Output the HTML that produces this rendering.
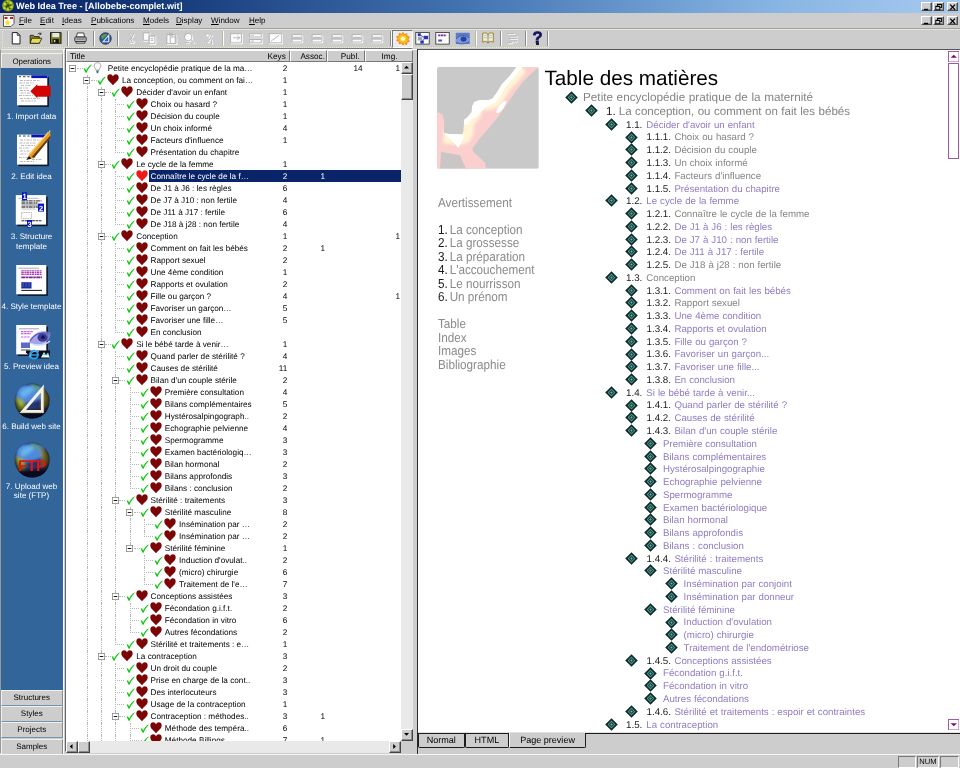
<!DOCTYPE html>
<html lang="fr"><head><meta charset="utf-8"><title>Web Idea Tree - [Allobebe-complet.wit]</title>
<style>
html,body{margin:0;padding:0}
body{width:960px;height:768px;overflow:hidden;position:relative;background:#cdcdcd;font-family:"Liberation Sans",sans-serif;font-size:8.2px;color:#000;text-rendering:geometricPrecision}
.abs{position:absolute}
div,span,a{box-sizing:border-box}
.ui{font-family:"Liberation Sans",sans-serif;font-size:8.2px;white-space:nowrap;line-height:10px}
#titlebar{left:0;top:0;width:960px;height:13.2px;background:linear-gradient(90deg,#0a246a 0%,#123676 15%,#4676b4 50%,#86b4e2 80%,#a6caf0 100%)}
#titlebar .t{left:16px;top:1px;color:#fff;font-weight:bold;font-size:9.1px;line-height:11px;white-space:nowrap}
.wb{position:absolute;width:11px;height:9.6px;background:#cdcdcd;border:1px solid;border-color:#fff #4c4c4c #4c4c4c #fff;box-shadow:inset -1px -1px 0 #8e8e8e}
.menu span{position:absolute;top:16px;font-size:8.05px;line-height:10px;white-space:nowrap}
.menu u{text-decoration:underline}
.sep{position:absolute;top:31px;width:2px;height:15px;border-left:1px solid #8a8a8a;border-right:1px solid #fff}
.ic{position:absolute;top:31px}
.btn{position:absolute;background:#cdcdcd;border:1px solid;border-color:#fff #555 #555 #fff;text-align:center;font-size:8.3px;line-height:13px}
.hd{position:absolute;top:50.2px;height:11.4px;background:#cdcdcd;border:1px solid;border-color:#fff #777 #777 #fff;font-size:8.2px;line-height:11.2px;white-space:nowrap;padding:0 3px}
.row{position:absolute;left:0;width:335px;height:12px;font-size:8.2px;line-height:12px;white-space:nowrap}
.row .tx{position:absolute;top:0;height:12px;letter-spacing:0}
.row .n{position:absolute;top:0;text-align:right;width:20px}
.sel{background:#0a246a;color:#fff}
.vl{position:absolute;width:0;border-left:1px dotted #b6b6b6}
.hl{position:absolute;height:0;border-top:1px dotted #b6b6b6}
.oplbl{position:absolute;left:0;width:63px;text-align:center;color:#fff;font-size:8.05px;line-height:9.7px}
.toc{position:absolute;white-space:nowrap;font-family:"Liberation Sans",sans-serif}
.g{color:#848484}.p{color:#907cc2}.k{color:#1a1a1a}
.nav .k{margin-right:-1.5px}
.nav{position:absolute;left:437.5px;transform:scaleX(0.9);transform-origin:0 0;font-size:13px;line-height:13.5px;color:#8a8a8a;white-space:nowrap}
</style></head><body><div id="app" style="position:absolute;left:0;top:0;width:960px;height:768px;overflow:hidden;will-change:transform">
<svg width="0" height="0" style="position:absolute"><defs>
<symbol id="heart" viewBox="0 0 12 11" preserveAspectRatio="none"><path d="M6 10.6 C4.6 8.6 0.3 6.3 0.3 3.3 C0.3 1.3 1.7 0.3 3.1 0.3 C4.4 0.3 5.5 1.1 6 2.3 C6.5 1.1 7.6 0.3 8.9 0.3 C10.3 0.3 11.7 1.3 11.7 3.3 C11.7 6.3 7.4 8.6 6 10.6Z"/></symbol>
<symbol id="chk" viewBox="0 0 9 9"><path d="M0.6 4.6 L2.0 3.9 L3.1 6.2 C4.4 3.6 6.2 1.5 8.4 0.2 L8.7 0.7 C6.6 2.7 4.8 5.4 3.6 8.6 L2.6 8.6 Z" fill="#14c814"/></symbol>
<symbol id="box" viewBox="0 0 7 7"><rect x="0.4" y="0.4" width="6.2" height="6.2" fill="#fff" stroke="#8a8a8a" stroke-width="0.8"/><path d="M1.7 3.5H5.3" stroke="#000" stroke-width="0.9"/></symbol>
<symbol id="dia" viewBox="0 0 12 12"><path d="M6 0.2L11.8 6L6 11.8L0.2 6Z" fill="#0e2a28"/><path d="M6 2.4L9.600 6L6 9.600L2.400 6Z" fill="#4f958e"/><path d="M6 3.600L8.400 6L6 8.400L3.600 6Z" fill="#143634"/><path d="M6 4.800L7.200 6L6 7.200L4.800 6Z" fill="#6ab0a8"/></symbol>
</defs></svg>
<div id="titlebar" class="abs"><svg class="abs" style="left:0.500px;top:0" width="14" height="13" viewBox="0 0 14 13"><path d="M5.800 10h2.800l0.500 2.400h-3.800z" fill="#4a3418"/><ellipse cx="7" cy="5.600" rx="5.900" ry="5.700" fill="#7c9c1c"/><g fill="#d8d028"><circle cx="4" cy="4" r="1.500"/><circle cx="9.500" cy="3" r="1.400"/><circle cx="10.500" cy="7" r="1.300"/><circle cx="3.500" cy="8" r="1.300"/><circle cx="7" cy="9.300" r="1.200"/><circle cx="6.800" cy="1.500" r="1.100"/></g><g fill="#2c5a14"><circle cx="7" cy="5.500" r="1.700"/><circle cx="5.500" cy="2.500" r="0.800"/><circle cx="9.800" cy="5" r="0.800"/><circle cx="5.300" cy="7" r="0.900"/><circle cx="8.500" cy="8.500" r="0.800"/></g><g fill="#68c838"><circle cx="8.300" cy="1.800" r="0.800"/><circle cx="2.300" cy="5.800" r="0.800"/><circle cx="11.300" cy="5" r="0.700"/></g></svg>
<div class="abs t">Web Idea Tree - [Allobebe-complet.wit]</div>
<div class="wb" style="left:921px;top:1.6px"><svg class="abs" style="left:0;top:0" width="9" height="8" viewBox="0 0 9 8"><path d="M2 6.5h4" stroke="#000" stroke-width="1.4"/></svg></div><div class="wb" style="left:932.5px;top:1.6px"><svg class="abs" style="left:0;top:0" width="9" height="8" viewBox="0 0 9 8"><rect x="3.5" y="1.2" width="4" height="3.4" fill="none" stroke="#000" stroke-width="0.9"/><rect x="1.8" y="3.2" width="4" height="3.6" fill="#cdcdcd" stroke="#000" stroke-width="0.9"/><path d="M1.8 3.5h4M3.5 1.5h4" stroke="#000" stroke-width="1"/></svg></div><div class="wb" style="left:946.5px;top:1.6px"><svg class="abs" style="left:0;top:0" width="9" height="8" viewBox="0 0 9 8"><path d="M2.2 1.6L7 6.6M7 1.6L2.2 6.6" stroke="#000" stroke-width="1.3"/></svg></div>
</div>
<div class="menu">
<svg class="abs" style="left:3px;top:15px" width="12" height="12" viewBox="0 0 12 12"><path d="M0.5 0.5h10.5v8l-3 3h-7.5z" fill="#fff" stroke="#333" stroke-width="0.8"/><path d="M1.5 2h3v2h-3zM7 2h3v2h-3z" fill="#d01818"/><path d="M4.5 4.5l1 2 2 .3-1.5 1.5.4 2.2-1.9-1-1.9 1 .4-2.2L1.5 6.8l2-.3z" fill="#f4e020"/></svg>
<span style="left:19px"><u>F</u>ile</span>
<span style="left:40px"><u>E</u>dit</span>
<span style="left:62px"><u>I</u>deas</span>
<span style="left:91px"><u>P</u>ublications</span>
<span style="left:143px"><u>M</u>odels</span>
<span style="left:176px"><u>D</u>isplay</span>
<span style="left:211px"><u>W</u>indow</span>
<span style="left:249px"><u>H</u>elp</span>
</div>
<div class="wb" style="left:921px;top:15.9px"><svg class="abs" style="left:0;top:0" width="9" height="8" viewBox="0 0 9 8"><path d="M2 6.5h4" stroke="#000" stroke-width="1.4"/></svg></div><div class="wb" style="left:932.5px;top:15.9px"><svg class="abs" style="left:0;top:0" width="9" height="8" viewBox="0 0 9 8"><rect x="3.5" y="1.2" width="4" height="3.4" fill="none" stroke="#000" stroke-width="0.9"/><rect x="1.8" y="3.2" width="4" height="3.6" fill="#cdcdcd" stroke="#000" stroke-width="0.9"/><path d="M1.8 3.5h4M3.5 1.5h4" stroke="#000" stroke-width="1"/></svg></div><div class="wb" style="left:946.5px;top:15.9px"><svg class="abs" style="left:0;top:0" width="9" height="8" viewBox="0 0 9 8"><path d="M2.2 1.6L7 6.6M7 1.6L2.2 6.6" stroke="#000" stroke-width="1.3"/></svg></div>
<div class="abs" style="left:0;top:28px;width:960px;height:1px;background:#a2a2a2"></div><div class="abs" style="left:0;top:29px;width:960px;height:1px;background:#e6e6da"></div><div class="abs" style="left:2px;top:29px;width:547px;height:18.500px;border:1px dotted #ececc4;border-right:0;border-top:0"></div>
<svg class="ic" style="left:10.5px;top:32px" width="10" height="12.5" viewBox="0 0 11 15"><path d="M1 0.7h6l3.3 3.3v10.3h-9.3z" fill="#fff" stroke="#222" stroke-width="1.2"/><path d="M7 0.7v3.3h3.3" fill="none" stroke="#222" stroke-width="1"/></svg>
<svg class="ic" style="left:29px;top:32px" width="14" height="12.5" viewBox="0 0 16 15"><path d="M1 4h4l1 1.5h6v8h-11z" fill="#8a8420" stroke="#222" stroke-width="1"/><path d="M3 7.5h12l-3 6h-11z" fill="#e8dc50" stroke="#222" stroke-width="1"/><path d="M10 2.5c1.5-1.5 3-1.5 4 0M14 0.8v2h-2" fill="none" stroke="#222" stroke-width="1"/></svg>
<svg class="ic" style="left:50px;top:32px" width="11.5" height="12" viewBox="0 0 15 15"><rect x="0.6" y="0.6" width="13.8" height="13.8" fill="#7a7a18" stroke="#111" stroke-width="1.2"/><rect x="3" y="1" width="9" height="5.5" fill="#e8e8e8"/><rect x="3.5" y="9" width="8" height="5" fill="#111"/><rect x="5" y="10" width="2" height="3" fill="#ccc"/></svg>
<div class="sep" style="left:67px"></div>
<svg class="ic" style="left:74px;top:32px" width="13" height="12.5" viewBox="0 0 16 15"><path d="M4 1h8l1 5h-10z" fill="#fff" stroke="#222" stroke-width="1"/><rect x="1" y="6" width="14" height="5.5" rx="1" fill="#bdbdbd" stroke="#222" stroke-width="1.1"/><path d="M2.5 11.5h11v2h-11z" fill="#e8e8e8" stroke="#222" stroke-width="1"/><path d="M3 8.5h10" stroke="#555" stroke-width="1"/></svg>
<div class="sep" style="left:93px"></div>
<svg class="ic" style="left:98.5px;top:32px" width="13" height="13" viewBox="0 0 16 16"><circle cx="8" cy="8" r="7" fill="#2a5cae" stroke="#333" stroke-width="1.2"/><path d="M3 5c2-2 5-3 7-2 -1 2-4 3-5 6 -1-1-2-2-2-4z" fill="#5aa03c"/><path d="M5 12L12 4v8z" fill="none" stroke="#e8e8e8" stroke-width="1.4"/></svg>
<div class="sep" style="left:117px"></div>
<svg class="ic" style="left:127px;top:32px" width="9" height="12.5" viewBox="0 0 12 15"><g fill="#fbfbfb" stroke="#fdfdfd" stroke-width="1.4" transform="translate(0.9,0.9)"><path d="M3 1l4 8M9 1l-4 8M4.5 9.5a2 2 0 1 0 .1 0M7.5 9.5a2 2 0 1 0 .1 0"/></g><g fill="none" stroke="#b0b0b0" stroke-width="1.1"><path d="M3 1l4 8M9 1l-4 8M4.5 9.5a2 2 0 1 0 .1 0M7.5 9.5a2 2 0 1 0 .1 0"/></g></svg>
<svg class="ic" style="left:142px;top:32px" width="15" height="12.5" viewBox="0 0 17 15"><g fill="#fbfbfb" stroke="#fdfdfd" stroke-width="1.4" transform="translate(0.9,0.9)"><path d="M1 1h7v9h-7zM8 5h7v9h-7z"/><path d="M10 8h3M10 10h3"/></g><g fill="none" stroke="#b0b0b0" stroke-width="1.1"><path d="M1 1h7v9h-7zM8 5h7v9h-7z"/><path d="M10 8h3M10 10h3"/></g></svg>
<svg class="ic" style="left:165px;top:32px" width="13" height="12.5" viewBox="0 0 15 15"><g fill="#fbfbfb" stroke="#fdfdfd" stroke-width="1.4" transform="translate(0.9,0.9)"><path d="M2 3h10v11h-10zM5 1.5h4v3h-4zM6 6h7v8h-7z"/></g><g fill="none" stroke="#b0b0b0" stroke-width="1.1"><path d="M2 3h10v11h-10zM5 1.5h4v3h-4zM6 6h7v8h-7z"/></g></svg>
<svg class="ic" style="left:183px;top:32px" width="13" height="12.5" viewBox="0 0 15 15"><g fill="#fbfbfb" stroke="#fdfdfd" stroke-width="1.4" transform="translate(0.9,0.9)"><circle cx="6" cy="6" r="4.5"/><path d="M9.5 9.5l4 4"/><path d="M2 13h5"/></g><g fill="none" stroke="#b0b0b0" stroke-width="1.1"><circle cx="6" cy="6" r="4.5"/><path d="M9.5 9.5l4 4"/><path d="M2 13h5"/></g></svg>
<svg class="ic" style="left:203px;top:32px" width="12" height="12.5" viewBox="0 0 14 15"><g fill="#fbfbfb" stroke="#fdfdfd" stroke-width="1.4" transform="translate(0.9,0.9)"><path d="M3 3c3-3 6 0 3 4M9 2l2 3M4 10l2 2 3-5M10 9v5"/></g><g fill="none" stroke="#b0b0b0" stroke-width="1.1"><path d="M3 3c3-3 6 0 3 4M9 2l2 3M4 10l2 2 3-5M10 9v5"/></g></svg>
<svg class="ic" style="left:228.5px;top:32px" width="14" height="12.5" viewBox="0 0 15 15"><g fill="#fbfbfb" stroke="#fdfdfd" stroke-width="1.4" transform="translate(0.9,0.9)"><path d="M1 2h13v11h-13zM4 7h8M9 4.5l3 2.5-3 2.5"/></g><g fill="none" stroke="#b0b0b0" stroke-width="1.1"><path d="M1 2h13v11h-13zM4 7h8M9 4.5l3 2.5-3 2.5"/></g></svg>
<svg class="ic" style="left:248px;top:32px" width="15" height="12.5" viewBox="0 0 16 15"><g fill="#fbfbfb" stroke="#fdfdfd" stroke-width="1.4" transform="translate(0.9,0.9)"><path d="M1 2h14v4h-14zM1 9h14v4h-14zM3 4h3M3 11h3"/></g><g fill="none" stroke="#b0b0b0" stroke-width="1.1"><path d="M1 2h14v4h-14zM1 9h14v4h-14zM3 4h3M3 11h3"/></g></svg>
<svg class="ic" style="left:267.5px;top:32px" width="15" height="12.5" viewBox="0 0 17 15"><g fill="#fbfbfb" stroke="#fdfdfd" stroke-width="1.4" transform="translate(0.9,0.9)"><path d="M1 2h15v11h-15zM3 11l10-7"/></g><g fill="none" stroke="#b0b0b0" stroke-width="1.1"><path d="M1 2h15v11h-15zM3 11l10-7"/></g></svg>
<svg class="ic" style="left:290px;top:32px" width="14" height="12.5" viewBox="0 0 16 15"><g fill="#fbfbfb" stroke="#fdfdfd" stroke-width="1.4" transform="translate(0.9,0.9)"><rect x="2" y="3" width="12" height="3.4" rx="1.5"/><rect x="2" y="8.6" width="12" height="3.4" rx="1.5"/><path d="M1 7.5h14"/></g><g fill="none" stroke="#b0b0b0" stroke-width="1.1"><rect x="2" y="3" width="12" height="3.4" rx="1.5"/><rect x="2" y="8.6" width="12" height="3.4" rx="1.5"/><path d="M1 7.5h14"/></g></svg>
<svg class="ic" style="left:310px;top:32px" width="14" height="12.5" viewBox="0 0 16 15"><g fill="#fbfbfb" stroke="#fdfdfd" stroke-width="1.4" transform="translate(0.9,0.9)"><rect x="2" y="3" width="12" height="3.4" rx="1.5"/><rect x="2" y="8.6" width="12" height="3.4" rx="1.5"/><path d="M1 7.5h14"/></g><g fill="none" stroke="#b0b0b0" stroke-width="1.1"><rect x="2" y="3" width="12" height="3.4" rx="1.5"/><rect x="2" y="8.6" width="12" height="3.4" rx="1.5"/><path d="M1 7.5h14"/></g></svg>
<svg class="ic" style="left:330px;top:32px" width="14" height="12.5" viewBox="0 0 16 15"><g fill="#fbfbfb" stroke="#fdfdfd" stroke-width="1.4" transform="translate(0.9,0.9)"><rect x="2" y="3" width="12" height="3.4" rx="1.5"/><rect x="2" y="8.6" width="12" height="3.4" rx="1.5"/><path d="M1 7.5h14"/></g><g fill="none" stroke="#b0b0b0" stroke-width="1.1"><rect x="2" y="3" width="12" height="3.4" rx="1.5"/><rect x="2" y="8.6" width="12" height="3.4" rx="1.5"/><path d="M1 7.5h14"/></g></svg>
<svg class="ic" style="left:350px;top:32px" width="14" height="12.5" viewBox="0 0 16 15"><g fill="#fbfbfb" stroke="#fdfdfd" stroke-width="1.4" transform="translate(0.9,0.9)"><rect x="2" y="3" width="12" height="3.4" rx="1.5"/><rect x="2" y="8.6" width="12" height="3.4" rx="1.5"/><path d="M1 7.5h14"/></g><g fill="none" stroke="#b0b0b0" stroke-width="1.1"><rect x="2" y="3" width="12" height="3.4" rx="1.5"/><rect x="2" y="8.6" width="12" height="3.4" rx="1.5"/><path d="M1 7.5h14"/></g></svg>
<svg class="ic" style="left:370px;top:32px" width="14" height="12.5" viewBox="0 0 16 15"><g fill="#fbfbfb" stroke="#fdfdfd" stroke-width="1.4" transform="translate(0.9,0.9)"><rect x="2" y="3" width="12" height="3.4" rx="1.5"/><rect x="2" y="8.6" width="12" height="3.4" rx="1.5"/><path d="M1 7.5h14"/></g><g fill="none" stroke="#b0b0b0" stroke-width="1.1"><rect x="2" y="3" width="12" height="3.4" rx="1.5"/><rect x="2" y="8.6" width="12" height="3.4" rx="1.5"/><path d="M1 7.5h14"/></g></svg>
<div class="sep" style="left:389.5px"></div>
<div class="abs" style="left:392px;top:29.5px;width:21px;height:18px;border:1px solid;border-color:#777 #fff #fff #777;background:#ececec"></div>
<svg class="ic" style="left:396px;top:32px" width="14" height="13.5" viewBox="0 0 16 16"><g fill="#f8b818" stroke="#ee7a14" stroke-width="1"><path d="M8 0.5l1.6 2.6 2.9-1 .1 3 3 .9-1.7 2.5 1.7 2.5-3 .9-.1 3-2.9-1L8 15.5l-1.6-2.6-2.9 1-.1-3-3-.9L2.1 8 .4 5.500l3-.9.1-3 2.900 1z"/></g><circle cx="8" cy="8" r="3.6" fill="#f8d838"/><circle cx="8" cy="8" r="2.2" fill="#fffdf0"/></svg>
<svg class="ic" style="left:415px;top:32px" width="15" height="12.8" viewBox="0 0 17 15"><rect x="0.6" y="0.6" width="15.8" height="13.6" fill="#fcfcfc" stroke="#3a3a3a" stroke-width="1"/><path d="M3 1.500h3.500v3.500h-3.500zM10 4.500h5v4h-5zM6 10h4v3.500h-4z" fill="#2a30b0"/><path d="M3 6h5v4h-5z" fill="#9aa0a8"/><path d="M6.500 4l4 2.500M10 8.500l-2 2" stroke="#5a6ad0" stroke-width="1.2"/></svg>
<svg class="ic" style="left:435px;top:32px" width="15" height="12.8" viewBox="0 0 17 15"><rect x="0.6" y="0.6" width="15.800" height="13.600" fill="#fcfcfc" stroke="#3a3a3a" stroke-width="1"/><path d="M3.500 4h9.500" stroke="#8a20a8" stroke-width="2.2" stroke-dasharray="2.500 0.600"/><path d="M3.500 10h4.500" stroke="#4a5aa0" stroke-width="2.400"/></svg>
<svg class="ic" style="left:455px;top:32px" width="15.5" height="12.8" viewBox="0 0 17 15"><rect x="0.3" y="0.8" width="16.400" height="13.400" rx="1" fill="#5c7cc8"/><path d="M0.500 9c3-6 12-7 16-2v3c-4 4-12 4-16 1z" fill="#7e9ce0"/><path d="M1 8c4-5 11-5 15-1" fill="none" stroke="#3a54a8" stroke-width="1.1"/><ellipse cx="9.500" cy="8.300" rx="3.600" ry="3" fill="#2c4296"/><path d="M1.500 12.500c4 2 10 2 14-1" fill="none" stroke="#4460b4" stroke-width="1"/></svg>
<svg class="ic" style="left:480.5px;top:32px" width="14" height="12.5" viewBox="0 0 15 15"><path d="M1 2c2-1 5-1 6.500 1 1.500-2 4.500-2 6.500-1v10c-2-1-5-1-6.500 1-1.500-2-4.500-2-6.500-1z" fill="#f2eede" stroke="#b09850" stroke-width="1.5"/><path d="M7.500 3v10" stroke="#6a5a30" stroke-width="0.8"/><path d="M2.500 4.500c1.500-.5 3-.3 4 .5M2.500 7c1.500-.5 3-.3 4 .5M8.500 5c1-.8 2.500-1 4-.5M8.500 7.500c1-.8 2.500-1 4-.5" fill="none" stroke="#7ab0a8" stroke-width="0.7"/></svg>
<div class="sep" style="left:499.5px"></div>
<svg class="ic" style="left:505px;top:32px" width="14" height="12.5" viewBox="0 0 16 15"><g fill="#fbfbfb" stroke="#fdfdfd" stroke-width="1.4" transform="translate(0.9,0.9)"><path d="M2 2h9M5 5h9M5 8h9M5 11h9M2 13h6"/></g><g fill="none" stroke="#b0b0b0" stroke-width="1.1"><path d="M2 2h9M5 5h9M5 8h9M5 11h9M2 13h6"/></g></svg>
<div class="sep" style="left:524.5px"></div>
<div class="abs" style="left:531px;top:28.500px;width:13px;text-align:center;font-weight:bold;font-size:16.500px;line-height:18px;color:#14145c;-webkit-text-stroke:0.7px #14145c">?</div><div class="abs" style="left:536px;top:42.800px;width:3.200px;height:2.600px;background:#d8c838;border:0.5px solid #222"></div>
<div class="sep" style="left:547px"></div>
<div class="sep" style="left:474.500px;border-left-color:#b8b8a0"></div>
<div class="sep" style="left:222px;border-left-color:#b8b8a0"></div>
<div class="abs" style="left:0;top:48.5px;width:960px;height:1px;background:#fff"></div>
<div class="abs" style="left:0;top:48.800px;width:64px;height:705px;border:1px solid;border-color:#ececdc #fff #fff #999"></div>
<div class="abs" style="left:1px;top:67.500px;width:61.500px;height:622.500px;background:#32659a"></div>
<div class="btn" style="left:1px;top:52.700px;width:61.500px;height:15.500px;line-height:15.400px;font-size:7.900px;border-color:#f2f2e6 #9c9c9c #cdcdcd #f2f2e6">Operations</div>
<svg class="abs" style="left:12px;top:68.7px" width="44" height="44" viewBox="0 0 44 44"><rect x="6.6" y="7.9" width="30.3" height="30" fill="#0c1828"/><rect x="5" y="6.3" width="30.3" height="30" fill="#fdfdfd"/><rect x="19.3" y="6.3" width="16" height="2.800" fill="#0a14b4"/><path d="M7 7.7h2M11 7.7h2.500M15.5 7.7h2" stroke="#222" stroke-width="0.9"/><g stroke="#9a9a9a" stroke-width="0.7" stroke-dasharray="3 1 1.500 1" fill="none"><path d="M8 11.500h20M7.500 14h14M9 16.500h10M7 19h9M8 21.500h9M8.500 24h11M7 26.500h14M8 29.500h20M9 32h15"/></g><path d="M18.300 22.300L25.300 15.200V16.800H38.600V27.700H25.300V29.300Z" fill="#d20404"/></svg>
<svg class="abs" style="left:12px;top:127.4px" width="44" height="44" viewBox="0 0 44 44"><rect x="6.6" y="9.2" width="30.3" height="30" fill="#0c1828"/><rect x="5" y="7.6" width="30.3" height="30" fill="#fdfdfd"/><rect x="19.3" y="7.6" width="16" height="2.800" fill="#0a14b4"/><path d="M7 9h2M11 9h2.500M15.5 9h2" stroke="#222" stroke-width="0.9"/><g stroke="#9a9a9a" stroke-width="0.7" stroke-dasharray="3 1 1.500 1" fill="none"><path d="M8 13h20M7.500 16h16M9 18.500h14M7 21h11M8 24h10M8.500 27h7M7 30.500h9M20 32.500h10M8 34.500h14"/></g><path d="M14.800 32.300L17.300 27.200 36.500 5.200 38.200 5 38.600 10.500 21.800 31.200Z" fill="#e89a24"/><path d="M21.800 31.200L38.600 10.500 38.400 8.500 20 29.500Z" fill="#5a3a14"/><path d="M17.300 27.200L36.500 5.200" stroke="#f8d070" stroke-width="1.300"/><path d="M14.300 33L17 29.200 19.600 31.600Z" fill="#1a1410"/><path d="M36.500 5.200L38.200 2.800 38.200 5Z" fill="#f0e8d8"/></svg>
<svg class="abs" style="left:12px;top:187.5px" width="44" height="44" viewBox="0 0 44 44"><rect x="5.4" y="8.7" width="30.3" height="29.5" fill="#0c1828"/><rect x="3.8" y="7.1" width="30.3" height="29.5" fill="#fdfdfd"/><path d="M6.500 10.300h20" stroke="#aaa" stroke-width="0.8"/><path d="M9.500 12.900h20M9.500 15h16M9.500 19h20" stroke="#555" stroke-width="1.3" stroke-dasharray="4 0.700 2 0.500"/><path d="M9.500 17h17" stroke="#777" stroke-width="1"/><path d="M9.500 21h14" stroke="#aaa" stroke-width="0.7"/><rect x="9.500" y="24.500" width="10" height="6" fill="none" stroke="#999" stroke-width="0.7" stroke-dasharray="1.500 0.800"/><path d="M9.500 32.800h20" stroke="#333" stroke-width="1.1" stroke-dasharray="3 0.500"/><rect x="10" y="4.300" width="5" height="8" fill="#0a14c8"/><rect x="26" y="15.600" width="6" height="8" fill="#0a14c8"/><rect x="15" y="32" width="5" height="7.500" fill="#0a14c8"/><g fill="#fff" font-family="Liberation Sans,sans-serif" font-size="7.500" font-weight="bold"><text x="10.400" y="11.300">1</text><text x="26.900" y="22.500">2</text><text x="15.400" y="38.600">3</text></g></svg>
<svg class="abs" style="left:12px;top:258px" width="44" height="44" viewBox="0 0 44 44"><rect x="5.800000000000001" y="8.6" width="30.1" height="29.3" fill="#0c1828"/><rect x="4.2" y="7" width="30.1" height="29.3" fill="#fdfdfd"/><path d="M6.500 10.200h20.500" stroke="#9a9aa0" stroke-width="0.8"/><g stroke="#b040b8" stroke-width="1.200" stroke-dasharray="2.500 0.600 1.500 0.500"><path d="M9.300 12.800h20.700M9.300 14.600h20.700M9.300 16.400h20.700"/></g><path d="M9.300 19.300h20.700" stroke="#7a2890" stroke-width="1.800" stroke-dasharray="4 0.500 2.500 0.500"/><rect x="9.300" y="24.200" width="10.200" height="6.300" fill="#1c2c9c"/><path d="M10 26h8.500M10 28h8.500" stroke="#5a78d0" stroke-width="0.700" stroke-dasharray="2 1"/><path d="M9.300 32.400h20.700" stroke="#111" stroke-width="1"/></svg>
<svg class="abs" style="left:12px;top:318.6px" width="44" height="44" viewBox="0 0 44 44"><rect x="5.800000000000001" y="7.6" width="30.1" height="29.4" fill="#0c1828"/><rect x="4.2" y="6" width="30.1" height="29.4" fill="#fdfdfd"/><path d="M7 9.800h20" stroke="#8a8ab0" stroke-width="0.8"/><g stroke="#d060d8" stroke-width="1.200" stroke-dasharray="2.500 0.600"><path d="M9 12.600h12M9 14.600h10M9 18h9"/></g><rect x="9" y="23.500" width="9" height="5.500" fill="#5a6ac8"/><path d="M9 31h9" stroke="#555" stroke-width="1"/><path d="M17 23.500C20 14 30 9.500 38.500 14C38.500 20 34 25.500 27 25.500C23 25.500 20 25 17 23.500Z" fill="#8c8ce0" opacity="0.780"/><path d="M18 22C22 15 30 12 37.500 15" fill="none" stroke="#5a58b8" stroke-width="1.200"/><ellipse cx="30.500" cy="18.500" rx="5" ry="4.300" fill="#3a3c98"/><circle cx="31" cy="18.300" r="1.800" fill="#141450"/><path d="M20 24.500C24 27 32 27 38 22" fill="none" stroke="#c8d4ff" stroke-width="1.300"/><path d="M14 31.500H38V33.500L37 39.500H20L14 33.500Z" fill="#0c0c1c"/><circle cx="22" cy="35.700" r="3.900" fill="none" stroke="#28a0e8" stroke-width="2"/><path d="M17 36h9.500" stroke="#28a0e8" stroke-width="1.500"/><path d="M17.500 38.500C19 32 25 30.500 27 33" fill="none" stroke="#70d0f8" stroke-width="0.900"/><path d="M29 38.500L32 33L34 36.500L36 33.500L37.500 38.500Z" fill="#e8f8f8"/><path d="M30.500 35.500L37 35" stroke="#30b0c0" stroke-width="0.800"/></svg>
<svg class="abs" style="left:12px;top:378.7px" width="44" height="44" viewBox="0 0 44 44"><defs><clipPath id="gc6"><circle cx="20.200" cy="22" r="17.600"/></clipPath><filter id="gb6" x="-30%" y="-30%" width="160%" height="160%"><feGaussianBlur stdDeviation="1.500"/></filter><radialGradient id="gs6" cx="42%" cy="36%" r="62%"><stop offset="0.550" stop-color="#000" stop-opacity="0"/><stop offset="1" stop-color="#05081c" stop-opacity="0.720"/></radialGradient></defs><g clip-path="url(#gc6)"><rect x="0" y="0" width="44" height="44" fill="#1c2868"/><g filter="url(#gb6)"><path d="M4 6H34V16C28 22 20 24 12 24L4 20Z" fill="#5088dc"/><path d="M8 14C12 8 18 7 24 9C20 13 16 17 10 19Z" fill="#68b4ec"/><path d="M18 5C24 4 30 7 30 12C26 13 22 12 18 5Z" fill="#5a9a88"/><path d="M2 18C6 18 12 20 14 26C14 32 10 36 6 34Z" fill="#74861e"/><path d="M5 20C8 20 11 21 12 24L8 28Z" fill="#a8b838"/><path d="M28 10C34 10 38 16 38 24C36 30 32 32 28 28C30 22 30 16 28 10Z" fill="#8c8428"/><path d="M14 26C20 24 28 26 30 32C26 36 18 36 12 33Z" fill="#28386c"/><path d="M4 32H40V44H4Z" fill="#080c28"/></g><circle cx="20.200" cy="22" r="17.600" fill="url(#gs6)"/></g><path d="M30.400 9.500V32.500H10.800Z" fill="none" stroke="#f4f0e4" stroke-width="3" stroke-linejoin="miter"/><path d="M31.700 8V33.800H9" fill="none" stroke="#a89860" stroke-width="0.700" opacity="0.800"/></svg>
<svg class="abs" style="left:12px;top:438.4px" width="44" height="44" viewBox="0 0 44 44"><defs><clipPath id="gc7"><circle cx="20.200" cy="22" r="17.600"/></clipPath><filter id="gb7" x="-30%" y="-30%" width="160%" height="160%"><feGaussianBlur stdDeviation="1.500"/></filter><radialGradient id="gs7" cx="42%" cy="36%" r="62%"><stop offset="0.550" stop-color="#000" stop-opacity="0"/><stop offset="1" stop-color="#05081c" stop-opacity="0.720"/></radialGradient></defs><g clip-path="url(#gc7)"><rect x="0" y="0" width="44" height="44" fill="#1c2868"/><g filter="url(#gb7)"><path d="M4 6H34V16C28 22 20 24 12 24L4 20Z" fill="#5088dc"/><path d="M8 14C12 8 18 7 24 9C20 13 16 17 10 19Z" fill="#68b4ec"/><path d="M18 5C24 4 30 7 30 12C26 13 22 12 18 5Z" fill="#5a9a88"/><path d="M2 18C6 18 12 20 14 26C14 32 10 36 6 34Z" fill="#74861e"/><path d="M5 20C8 20 11 21 12 24L8 28Z" fill="#a8b838"/><path d="M28 10C34 10 38 16 38 24C36 30 32 32 28 28C30 22 30 16 28 10Z" fill="#8c8428"/><path d="M14 26C20 24 28 26 30 32C26 36 18 36 12 33Z" fill="#28386c"/><path d="M4 32H40V44H4Z" fill="#080c28"/></g><circle cx="20.200" cy="22" r="17.600" fill="url(#gs7)"/></g><text x="20" y="32.800" text-anchor="middle" font-family="Liberation Sans,sans-serif" font-weight="bold" font-size="15.500" fill="#e01414" letter-spacing="-0.500">FTP</text></svg>
<div class="oplbl" style="top:111.8px">1. Import data</div>
<div class="oplbl" style="top:171.8px">2. Edit idea</div>
<div class="oplbl" style="top:232px">3. Structure<br>template</div>
<div class="oplbl" style="top:301.8px">4. Style template</div>
<div class="oplbl" style="top:361.6px">5. Preview idea</div>
<div class="oplbl" style="top:421.8px">6. Build web site</div>
<div class="oplbl" style="top:481.7px">7. Upload web<br>site (FTP)</div>
<div class="btn" style="left:1px;top:689.8px;width:61.5px;height:16px;line-height:14.500px;font-size:8px;border-color:#f0f0f0 #8a8a8a #6f94ac #f0f0f0">Structures</div>
<div class="btn" style="left:1px;top:706px;width:61.5px;height:16px;line-height:14.500px;font-size:8px;border-color:#f0f0f0 #8a8a8a #6f94ac #f0f0f0">Styles</div>
<div class="btn" style="left:1px;top:722.3px;width:61.5px;height:16px;line-height:14.500px;font-size:8px;border-color:#f0f0f0 #8a8a8a #6f94ac #f0f0f0">Projects</div>
<div class="btn" style="left:1px;top:738.5px;width:61.5px;height:16px;line-height:14.500px;font-size:8px;border-color:#f0f0f0 #8a8a8a #6f94ac #f0f0f0">Samples</div>
<div class="abs" style="left:65px;top:48px;width:348px;height:704px;border:1px solid;border-color:#777 #fff #fff #666;background:#fff;overflow:hidden"></div>
<div class="hd" style="left:66px;width:224.400px;text-align:left">Title<span style="position:absolute;right:3.600px;top:0">Keys</span></div>
<div class="hd" style="left:290.400px;width:36.600px;text-align:left;padding-left:9px">Assoc.</div>
<div class="hd" style="left:327px;width:38px;text-align:right;padding-right:4.500px">Publ.</div>
<div class="hd" style="left:365px;width:47.500px;text-align:right;padding-right:14px">Img.</div>
<div class="abs" style="left:66px;top:62px;width:335px;height:679px;overflow:hidden;background:#fff">
<div class="hl" style="left:10.50px;top:6.00px;width:6.00px"></div>
<svg class="abs" style="left:3.10px;top:2.90px" width="7" height="7"><use href="#box"/></svg>
<svg class="abs" style="left:16.80px;top:1.80px" width="9" height="9.500"><use href="#chk"/></svg>
<svg class="abs" style="left:27.00px;top:0.30px" width="9" height="12" viewBox="0 0 9 12"><path d="M4.500 0.600a3.300 3.300 0 0 1 2 6l-.4 1.600h-3.200l-.4-1.600a3.300 3.300 0 0 1 2-6z" fill="#fafafa" stroke="#9a9a9a" stroke-width="0.8"/><path d="M3.200 8.600h2.600l-.5 2.600h-1.600z" fill="#2a7a8a"/></svg>
<div class="row" style="top:1.20px;"><span class="tx" style="left:41.80px">Petite encyclopédie pratique de la ma…</span>
<span class="n" style="left:201.30px">2</span>
<span class="n" style="left:276.60px">14</span>
<span class="n" style="left:314.00px">1</span>
</div>
<div class="vl" style="left:20.75px;top:12.50px;height:12.00px"></div>
<div class="hl" style="left:24.75px;top:18.00px;width:6.00px"></div>
<svg class="abs" style="left:17.35px;top:14.90px" width="7" height="7"><use href="#box"/></svg>
<svg class="abs" style="left:31.05px;top:13.80px" width="9" height="9.500"><use href="#chk"/></svg>
<svg class="abs" style="left:41.15px;top:11.70px" width="12" height="11.800" fill="#7c0606"><use href="#heart"/></svg>
<div class="row" style="top:13.20px;"><span class="tx" style="left:56.05px">La conception, ou comment on fai…</span>
<span class="n" style="left:201.30px">1</span>
</div>
<div class="vl" style="left:20.75px;top:24.50px;height:12px"></div>
<div class="vl" style="left:35.00px;top:24.50px;height:12.00px"></div>
<div class="hl" style="left:39.00px;top:30.00px;width:6.00px"></div>
<svg class="abs" style="left:31.60px;top:26.90px" width="7" height="7"><use href="#box"/></svg>
<svg class="abs" style="left:45.30px;top:25.80px" width="9" height="9.500"><use href="#chk"/></svg>
<svg class="abs" style="left:55.40px;top:23.70px" width="12" height="11.800" fill="#7c0606"><use href="#heart"/></svg>
<div class="row" style="top:25.20px;"><span class="tx" style="left:70.30px">Décider d&#x27;avoir un enfant</span>
<span class="n" style="left:201.30px">1</span>
</div>
<div class="vl" style="left:20.75px;top:36.50px;height:12px"></div>
<div class="vl" style="left:35.00px;top:36.50px;height:12px"></div>
<div class="vl" style="left:49.25px;top:36.50px;height:12.00px"></div>
<div class="hl" style="left:49.25px;top:42.00px;width:9.00px"></div>
<svg class="abs" style="left:59.55px;top:37.80px" width="9" height="9.500"><use href="#chk"/></svg>
<svg class="abs" style="left:69.65px;top:35.70px" width="12" height="11.800" fill="#7c0606"><use href="#heart"/></svg>
<div class="row" style="top:37.20px;"><span class="tx" style="left:84.55px">Choix ou hasard ?</span>
<span class="n" style="left:201.30px">1</span>
</div>
<div class="vl" style="left:20.75px;top:48.50px;height:12px"></div>
<div class="vl" style="left:35.00px;top:48.50px;height:12px"></div>
<div class="vl" style="left:49.25px;top:48.50px;height:12.00px"></div>
<div class="hl" style="left:49.25px;top:54.00px;width:9.00px"></div>
<svg class="abs" style="left:59.55px;top:49.80px" width="9" height="9.500"><use href="#chk"/></svg>
<svg class="abs" style="left:69.65px;top:47.70px" width="12" height="11.800" fill="#7c0606"><use href="#heart"/></svg>
<div class="row" style="top:49.20px;"><span class="tx" style="left:84.55px">Décision du couple</span>
<span class="n" style="left:201.30px">1</span>
</div>
<div class="vl" style="left:20.75px;top:60.50px;height:12px"></div>
<div class="vl" style="left:35.00px;top:60.50px;height:12px"></div>
<div class="vl" style="left:49.25px;top:60.50px;height:12.00px"></div>
<div class="hl" style="left:49.25px;top:66.00px;width:9.00px"></div>
<svg class="abs" style="left:59.55px;top:61.80px" width="9" height="9.500"><use href="#chk"/></svg>
<svg class="abs" style="left:69.65px;top:59.70px" width="12" height="11.800" fill="#7c0606"><use href="#heart"/></svg>
<div class="row" style="top:61.20px;"><span class="tx" style="left:84.55px">Un choix informé</span>
<span class="n" style="left:201.30px">4</span>
</div>
<div class="vl" style="left:20.75px;top:72.50px;height:12px"></div>
<div class="vl" style="left:35.00px;top:72.50px;height:12px"></div>
<div class="vl" style="left:49.25px;top:72.50px;height:12.00px"></div>
<div class="hl" style="left:49.25px;top:78.00px;width:9.00px"></div>
<svg class="abs" style="left:59.55px;top:73.80px" width="9" height="9.500"><use href="#chk"/></svg>
<svg class="abs" style="left:69.65px;top:71.70px" width="12" height="11.800" fill="#7c0606"><use href="#heart"/></svg>
<div class="row" style="top:73.20px;"><span class="tx" style="left:84.55px">Facteurs d&#x27;influence</span>
<span class="n" style="left:201.30px">1</span>
</div>
<div class="vl" style="left:20.75px;top:84.50px;height:12px"></div>
<div class="vl" style="left:35.00px;top:84.50px;height:12px"></div>
<div class="vl" style="left:49.25px;top:84.50px;height:6.00px"></div>
<div class="hl" style="left:49.25px;top:90.00px;width:9.00px"></div>
<svg class="abs" style="left:59.55px;top:85.80px" width="9" height="9.500"><use href="#chk"/></svg>
<svg class="abs" style="left:69.65px;top:83.70px" width="12" height="11.800" fill="#7c0606"><use href="#heart"/></svg>
<div class="row" style="top:85.20px;"><span class="tx" style="left:84.55px">Présentation du chapitre</span>
</div>
<div class="vl" style="left:20.75px;top:96.50px;height:12px"></div>
<div class="vl" style="left:35.00px;top:96.50px;height:12.00px"></div>
<div class="hl" style="left:39.00px;top:102.00px;width:6.00px"></div>
<svg class="abs" style="left:31.60px;top:98.90px" width="7" height="7"><use href="#box"/></svg>
<svg class="abs" style="left:45.30px;top:97.80px" width="9" height="9.500"><use href="#chk"/></svg>
<svg class="abs" style="left:55.40px;top:95.70px" width="12" height="11.800" fill="#7c0606"><use href="#heart"/></svg>
<div class="row" style="top:97.20px;"><span class="tx" style="left:70.30px">Le cycle de la femme</span>
<span class="n" style="left:201.30px">1</span>
</div>
<div class="vl" style="left:20.75px;top:108.50px;height:12px"></div>
<div class="vl" style="left:35.00px;top:108.50px;height:12px"></div>
<div class="vl" style="left:49.25px;top:108.50px;height:12.00px"></div>
<div class="hl" style="left:49.25px;top:114.00px;width:9.00px"></div>
<svg class="abs" style="left:59.55px;top:109.80px" width="9" height="9.500"><use href="#chk"/></svg>
<svg class="abs" style="left:69.65px;top:107.70px" width="12" height="11.800" fill="#f01818"><use href="#heart"/></svg>
<div class="abs sel" style="left:82.95px;top:108.20px;width:300px;height:12.300px"></div>
<div class="row" style="top:109.20px;color:#fff;"><span class="tx" style="left:84.55px">Connaître le cycle de la f…</span>
<span class="n" style="left:201.30px">2</span>
<span class="n" style="left:239.00px">1</span>
</div>
<div class="vl" style="left:20.75px;top:120.50px;height:12px"></div>
<div class="vl" style="left:35.00px;top:120.50px;height:12px"></div>
<div class="vl" style="left:49.25px;top:120.50px;height:12.00px"></div>
<div class="hl" style="left:49.25px;top:126.00px;width:9.00px"></div>
<svg class="abs" style="left:59.55px;top:121.80px" width="9" height="9.500"><use href="#chk"/></svg>
<svg class="abs" style="left:69.65px;top:119.70px" width="12" height="11.800" fill="#7c0606"><use href="#heart"/></svg>
<div class="row" style="top:121.20px;"><span class="tx" style="left:84.55px">De J1 à J6 : les règles</span>
<span class="n" style="left:201.30px">6</span>
</div>
<div class="vl" style="left:20.75px;top:132.50px;height:12px"></div>
<div class="vl" style="left:35.00px;top:132.50px;height:12px"></div>
<div class="vl" style="left:49.25px;top:132.50px;height:12.00px"></div>
<div class="hl" style="left:49.25px;top:138.00px;width:9.00px"></div>
<svg class="abs" style="left:59.55px;top:133.80px" width="9" height="9.500"><use href="#chk"/></svg>
<svg class="abs" style="left:69.65px;top:131.70px" width="12" height="11.800" fill="#7c0606"><use href="#heart"/></svg>
<div class="row" style="top:133.20px;"><span class="tx" style="left:84.55px">De J7 à J10 : non fertile</span>
<span class="n" style="left:201.30px">4</span>
</div>
<div class="vl" style="left:20.75px;top:144.50px;height:12px"></div>
<div class="vl" style="left:35.00px;top:144.50px;height:12px"></div>
<div class="vl" style="left:49.25px;top:144.50px;height:12.00px"></div>
<div class="hl" style="left:49.25px;top:150.00px;width:9.00px"></div>
<svg class="abs" style="left:59.55px;top:145.80px" width="9" height="9.500"><use href="#chk"/></svg>
<svg class="abs" style="left:69.65px;top:143.70px" width="12" height="11.800" fill="#7c0606"><use href="#heart"/></svg>
<div class="row" style="top:145.20px;"><span class="tx" style="left:84.55px">De J11 à J17 : fertile</span>
<span class="n" style="left:201.30px">6</span>
</div>
<div class="vl" style="left:20.75px;top:156.50px;height:12px"></div>
<div class="vl" style="left:35.00px;top:156.50px;height:12px"></div>
<div class="vl" style="left:49.25px;top:156.50px;height:6.00px"></div>
<div class="hl" style="left:49.25px;top:162.00px;width:9.00px"></div>
<svg class="abs" style="left:59.55px;top:157.80px" width="9" height="9.500"><use href="#chk"/></svg>
<svg class="abs" style="left:69.65px;top:155.70px" width="12" height="11.800" fill="#7c0606"><use href="#heart"/></svg>
<div class="row" style="top:157.20px;"><span class="tx" style="left:84.55px">De J18 à j28 : non fertile</span>
<span class="n" style="left:201.30px">4</span>
</div>
<div class="vl" style="left:20.75px;top:168.50px;height:12px"></div>
<div class="vl" style="left:35.00px;top:168.50px;height:12.00px"></div>
<div class="hl" style="left:39.00px;top:174.00px;width:6.00px"></div>
<svg class="abs" style="left:31.60px;top:170.90px" width="7" height="7"><use href="#box"/></svg>
<svg class="abs" style="left:45.30px;top:169.80px" width="9" height="9.500"><use href="#chk"/></svg>
<svg class="abs" style="left:55.40px;top:167.70px" width="12" height="11.800" fill="#7c0606"><use href="#heart"/></svg>
<div class="row" style="top:169.20px;"><span class="tx" style="left:70.30px">Conception</span>
<span class="n" style="left:201.30px">1</span>
<span class="n" style="left:314.00px">1</span>
</div>
<div class="vl" style="left:20.75px;top:180.50px;height:12px"></div>
<div class="vl" style="left:35.00px;top:180.50px;height:12px"></div>
<div class="vl" style="left:49.25px;top:180.50px;height:12.00px"></div>
<div class="hl" style="left:49.25px;top:186.00px;width:9.00px"></div>
<svg class="abs" style="left:59.55px;top:181.80px" width="9" height="9.500"><use href="#chk"/></svg>
<svg class="abs" style="left:69.65px;top:179.70px" width="12" height="11.800" fill="#7c0606"><use href="#heart"/></svg>
<div class="row" style="top:181.20px;"><span class="tx" style="left:84.55px">Comment on fait les bébés</span>
<span class="n" style="left:201.30px">2</span>
<span class="n" style="left:239.00px">1</span>
</div>
<div class="vl" style="left:20.75px;top:192.50px;height:12px"></div>
<div class="vl" style="left:35.00px;top:192.50px;height:12px"></div>
<div class="vl" style="left:49.25px;top:192.50px;height:12.00px"></div>
<div class="hl" style="left:49.25px;top:198.00px;width:9.00px"></div>
<svg class="abs" style="left:59.55px;top:193.80px" width="9" height="9.500"><use href="#chk"/></svg>
<svg class="abs" style="left:69.65px;top:191.70px" width="12" height="11.800" fill="#7c0606"><use href="#heart"/></svg>
<div class="row" style="top:193.20px;"><span class="tx" style="left:84.55px">Rapport sexuel</span>
<span class="n" style="left:201.30px">2</span>
</div>
<div class="vl" style="left:20.75px;top:204.50px;height:12px"></div>
<div class="vl" style="left:35.00px;top:204.50px;height:12px"></div>
<div class="vl" style="left:49.25px;top:204.50px;height:12.00px"></div>
<div class="hl" style="left:49.25px;top:210.00px;width:9.00px"></div>
<svg class="abs" style="left:59.55px;top:205.80px" width="9" height="9.500"><use href="#chk"/></svg>
<svg class="abs" style="left:69.65px;top:203.70px" width="12" height="11.800" fill="#7c0606"><use href="#heart"/></svg>
<div class="row" style="top:205.20px;"><span class="tx" style="left:84.55px">Une 4ème condition</span>
<span class="n" style="left:201.30px">1</span>
</div>
<div class="vl" style="left:20.75px;top:216.50px;height:12px"></div>
<div class="vl" style="left:35.00px;top:216.50px;height:12px"></div>
<div class="vl" style="left:49.25px;top:216.50px;height:12.00px"></div>
<div class="hl" style="left:49.25px;top:222.00px;width:9.00px"></div>
<svg class="abs" style="left:59.55px;top:217.80px" width="9" height="9.500"><use href="#chk"/></svg>
<svg class="abs" style="left:69.65px;top:215.70px" width="12" height="11.800" fill="#7c0606"><use href="#heart"/></svg>
<div class="row" style="top:217.20px;"><span class="tx" style="left:84.55px">Rapports et ovulation</span>
<span class="n" style="left:201.30px">2</span>
</div>
<div class="vl" style="left:20.75px;top:228.50px;height:12px"></div>
<div class="vl" style="left:35.00px;top:228.50px;height:12px"></div>
<div class="vl" style="left:49.25px;top:228.50px;height:12.00px"></div>
<div class="hl" style="left:49.25px;top:234.00px;width:9.00px"></div>
<svg class="abs" style="left:59.55px;top:229.80px" width="9" height="9.500"><use href="#chk"/></svg>
<svg class="abs" style="left:69.65px;top:227.70px" width="12" height="11.800" fill="#7c0606"><use href="#heart"/></svg>
<div class="row" style="top:229.20px;"><span class="tx" style="left:84.55px">Fille ou garçon ?</span>
<span class="n" style="left:201.30px">4</span>
<span class="n" style="left:314.00px">1</span>
</div>
<div class="vl" style="left:20.75px;top:240.50px;height:12px"></div>
<div class="vl" style="left:35.00px;top:240.50px;height:12px"></div>
<div class="vl" style="left:49.25px;top:240.50px;height:12.00px"></div>
<div class="hl" style="left:49.25px;top:246.00px;width:9.00px"></div>
<svg class="abs" style="left:59.55px;top:241.80px" width="9" height="9.500"><use href="#chk"/></svg>
<svg class="abs" style="left:69.65px;top:239.70px" width="12" height="11.800" fill="#7c0606"><use href="#heart"/></svg>
<div class="row" style="top:241.20px;"><span class="tx" style="left:84.55px">Favoriser un garçon…</span>
<span class="n" style="left:201.30px">5</span>
</div>
<div class="vl" style="left:20.75px;top:252.50px;height:12px"></div>
<div class="vl" style="left:35.00px;top:252.50px;height:12px"></div>
<div class="vl" style="left:49.25px;top:252.50px;height:12.00px"></div>
<div class="hl" style="left:49.25px;top:258.00px;width:9.00px"></div>
<svg class="abs" style="left:59.55px;top:253.80px" width="9" height="9.500"><use href="#chk"/></svg>
<svg class="abs" style="left:69.65px;top:251.70px" width="12" height="11.800" fill="#7c0606"><use href="#heart"/></svg>
<div class="row" style="top:253.20px;"><span class="tx" style="left:84.55px">Favoriser une fille…</span>
<span class="n" style="left:201.30px">5</span>
</div>
<div class="vl" style="left:20.75px;top:264.50px;height:12px"></div>
<div class="vl" style="left:35.00px;top:264.50px;height:12px"></div>
<div class="vl" style="left:49.25px;top:264.50px;height:6.00px"></div>
<div class="hl" style="left:49.25px;top:270.00px;width:9.00px"></div>
<svg class="abs" style="left:59.55px;top:265.80px" width="9" height="9.500"><use href="#chk"/></svg>
<svg class="abs" style="left:69.65px;top:263.70px" width="12" height="11.800" fill="#7c0606"><use href="#heart"/></svg>
<div class="row" style="top:265.20px;"><span class="tx" style="left:84.55px">En conclusion</span>
</div>
<div class="vl" style="left:20.75px;top:276.50px;height:12px"></div>
<div class="vl" style="left:35.00px;top:276.50px;height:12.00px"></div>
<div class="hl" style="left:39.00px;top:282.00px;width:6.00px"></div>
<svg class="abs" style="left:31.60px;top:278.90px" width="7" height="7"><use href="#box"/></svg>
<svg class="abs" style="left:45.30px;top:277.80px" width="9" height="9.500"><use href="#chk"/></svg>
<svg class="abs" style="left:55.40px;top:275.70px" width="12" height="11.800" fill="#7c0606"><use href="#heart"/></svg>
<div class="row" style="top:277.20px;"><span class="tx" style="left:70.30px">Si le bébé tarde à venir…</span>
<span class="n" style="left:201.30px">1</span>
</div>
<div class="vl" style="left:20.75px;top:288.50px;height:12px"></div>
<div class="vl" style="left:35.00px;top:288.50px;height:12px"></div>
<div class="vl" style="left:49.25px;top:288.50px;height:12.00px"></div>
<div class="hl" style="left:49.25px;top:294.00px;width:9.00px"></div>
<svg class="abs" style="left:59.55px;top:289.80px" width="9" height="9.500"><use href="#chk"/></svg>
<svg class="abs" style="left:69.65px;top:287.70px" width="12" height="11.800" fill="#7c0606"><use href="#heart"/></svg>
<div class="row" style="top:289.20px;"><span class="tx" style="left:84.55px">Quand parler de stérilité ?</span>
<span class="n" style="left:201.30px">4</span>
</div>
<div class="vl" style="left:20.75px;top:300.50px;height:12px"></div>
<div class="vl" style="left:35.00px;top:300.50px;height:12px"></div>
<div class="vl" style="left:49.25px;top:300.50px;height:12.00px"></div>
<div class="hl" style="left:49.25px;top:306.00px;width:9.00px"></div>
<svg class="abs" style="left:59.55px;top:301.80px" width="9" height="9.500"><use href="#chk"/></svg>
<svg class="abs" style="left:69.65px;top:299.70px" width="12" height="11.800" fill="#7c0606"><use href="#heart"/></svg>
<div class="row" style="top:301.20px;"><span class="tx" style="left:84.55px">Causes de stérilité</span>
<span class="n" style="left:201.30px">11</span>
</div>
<div class="vl" style="left:20.75px;top:312.50px;height:12px"></div>
<div class="vl" style="left:35.00px;top:312.50px;height:12px"></div>
<div class="vl" style="left:49.25px;top:312.50px;height:12.00px"></div>
<div class="hl" style="left:53.25px;top:318.00px;width:6.00px"></div>
<svg class="abs" style="left:45.85px;top:314.90px" width="7" height="7"><use href="#box"/></svg>
<svg class="abs" style="left:59.55px;top:313.80px" width="9" height="9.500"><use href="#chk"/></svg>
<svg class="abs" style="left:69.65px;top:311.70px" width="12" height="11.800" fill="#7c0606"><use href="#heart"/></svg>
<div class="row" style="top:313.20px;"><span class="tx" style="left:84.55px">Bilan d&#x27;un couple stérile</span>
<span class="n" style="left:201.30px">2</span>
</div>
<div class="vl" style="left:20.75px;top:324.50px;height:12px"></div>
<div class="vl" style="left:35.00px;top:324.50px;height:12px"></div>
<div class="vl" style="left:49.25px;top:324.50px;height:12px"></div>
<div class="vl" style="left:63.50px;top:324.50px;height:12.00px"></div>
<div class="hl" style="left:63.50px;top:330.00px;width:9.00px"></div>
<svg class="abs" style="left:73.80px;top:325.80px" width="9" height="9.500"><use href="#chk"/></svg>
<svg class="abs" style="left:83.90px;top:323.70px" width="12" height="11.800" fill="#7c0606"><use href="#heart"/></svg>
<div class="row" style="top:325.20px;"><span class="tx" style="left:98.80px">Première consultation</span>
<span class="n" style="left:201.30px">4</span>
</div>
<div class="vl" style="left:20.75px;top:336.50px;height:12px"></div>
<div class="vl" style="left:35.00px;top:336.50px;height:12px"></div>
<div class="vl" style="left:49.25px;top:336.50px;height:12px"></div>
<div class="vl" style="left:63.50px;top:336.50px;height:12.00px"></div>
<div class="hl" style="left:63.50px;top:342.00px;width:9.00px"></div>
<svg class="abs" style="left:73.80px;top:337.80px" width="9" height="9.500"><use href="#chk"/></svg>
<svg class="abs" style="left:83.90px;top:335.70px" width="12" height="11.800" fill="#7c0606"><use href="#heart"/></svg>
<div class="row" style="top:337.20px;"><span class="tx" style="left:98.80px">Bilans complémentaires</span>
<span class="n" style="left:201.30px">5</span>
</div>
<div class="vl" style="left:20.75px;top:348.50px;height:12px"></div>
<div class="vl" style="left:35.00px;top:348.50px;height:12px"></div>
<div class="vl" style="left:49.25px;top:348.50px;height:12px"></div>
<div class="vl" style="left:63.50px;top:348.50px;height:12.00px"></div>
<div class="hl" style="left:63.50px;top:354.00px;width:9.00px"></div>
<svg class="abs" style="left:73.80px;top:349.80px" width="9" height="9.500"><use href="#chk"/></svg>
<svg class="abs" style="left:83.90px;top:347.70px" width="12" height="11.800" fill="#7c0606"><use href="#heart"/></svg>
<div class="row" style="top:349.20px;"><span class="tx" style="left:98.80px">Hystérosalpingograph..</span>
<span class="n" style="left:201.30px">2</span>
</div>
<div class="vl" style="left:20.75px;top:360.50px;height:12px"></div>
<div class="vl" style="left:35.00px;top:360.50px;height:12px"></div>
<div class="vl" style="left:49.25px;top:360.50px;height:12px"></div>
<div class="vl" style="left:63.50px;top:360.50px;height:12.00px"></div>
<div class="hl" style="left:63.50px;top:366.00px;width:9.00px"></div>
<svg class="abs" style="left:73.80px;top:361.80px" width="9" height="9.500"><use href="#chk"/></svg>
<svg class="abs" style="left:83.90px;top:359.70px" width="12" height="11.800" fill="#7c0606"><use href="#heart"/></svg>
<div class="row" style="top:361.20px;"><span class="tx" style="left:98.80px">Echographie pelvienne</span>
<span class="n" style="left:201.30px">4</span>
</div>
<div class="vl" style="left:20.75px;top:372.50px;height:12px"></div>
<div class="vl" style="left:35.00px;top:372.50px;height:12px"></div>
<div class="vl" style="left:49.25px;top:372.50px;height:12px"></div>
<div class="vl" style="left:63.50px;top:372.50px;height:12.00px"></div>
<div class="hl" style="left:63.50px;top:378.00px;width:9.00px"></div>
<svg class="abs" style="left:73.80px;top:373.80px" width="9" height="9.500"><use href="#chk"/></svg>
<svg class="abs" style="left:83.90px;top:371.70px" width="12" height="11.800" fill="#7c0606"><use href="#heart"/></svg>
<div class="row" style="top:373.20px;"><span class="tx" style="left:98.80px">Spermogramme</span>
<span class="n" style="left:201.30px">3</span>
</div>
<div class="vl" style="left:20.75px;top:384.50px;height:12px"></div>
<div class="vl" style="left:35.00px;top:384.50px;height:12px"></div>
<div class="vl" style="left:49.25px;top:384.50px;height:12px"></div>
<div class="vl" style="left:63.50px;top:384.50px;height:12.00px"></div>
<div class="hl" style="left:63.50px;top:390.00px;width:9.00px"></div>
<svg class="abs" style="left:73.80px;top:385.80px" width="9" height="9.500"><use href="#chk"/></svg>
<svg class="abs" style="left:83.90px;top:383.70px" width="12" height="11.800" fill="#7c0606"><use href="#heart"/></svg>
<div class="row" style="top:385.20px;"><span class="tx" style="left:98.80px">Examen bactériologiq…</span>
<span class="n" style="left:201.30px">3</span>
</div>
<div class="vl" style="left:20.75px;top:396.50px;height:12px"></div>
<div class="vl" style="left:35.00px;top:396.50px;height:12px"></div>
<div class="vl" style="left:49.25px;top:396.50px;height:12px"></div>
<div class="vl" style="left:63.50px;top:396.50px;height:12.00px"></div>
<div class="hl" style="left:63.50px;top:402.00px;width:9.00px"></div>
<svg class="abs" style="left:73.80px;top:397.80px" width="9" height="9.500"><use href="#chk"/></svg>
<svg class="abs" style="left:83.90px;top:395.70px" width="12" height="11.800" fill="#7c0606"><use href="#heart"/></svg>
<div class="row" style="top:397.20px;"><span class="tx" style="left:98.80px">Bilan hormonal</span>
<span class="n" style="left:201.30px">2</span>
</div>
<div class="vl" style="left:20.75px;top:408.50px;height:12px"></div>
<div class="vl" style="left:35.00px;top:408.50px;height:12px"></div>
<div class="vl" style="left:49.25px;top:408.50px;height:12px"></div>
<div class="vl" style="left:63.50px;top:408.50px;height:12.00px"></div>
<div class="hl" style="left:63.50px;top:414.00px;width:9.00px"></div>
<svg class="abs" style="left:73.80px;top:409.80px" width="9" height="9.500"><use href="#chk"/></svg>
<svg class="abs" style="left:83.90px;top:407.70px" width="12" height="11.800" fill="#7c0606"><use href="#heart"/></svg>
<div class="row" style="top:409.20px;"><span class="tx" style="left:98.80px">Bilans approfondis</span>
<span class="n" style="left:201.30px">3</span>
</div>
<div class="vl" style="left:20.75px;top:420.50px;height:12px"></div>
<div class="vl" style="left:35.00px;top:420.50px;height:12px"></div>
<div class="vl" style="left:49.25px;top:420.50px;height:12px"></div>
<div class="vl" style="left:63.50px;top:420.50px;height:6.00px"></div>
<div class="hl" style="left:63.50px;top:426.00px;width:9.00px"></div>
<svg class="abs" style="left:73.80px;top:421.80px" width="9" height="9.500"><use href="#chk"/></svg>
<svg class="abs" style="left:83.90px;top:419.70px" width="12" height="11.800" fill="#7c0606"><use href="#heart"/></svg>
<div class="row" style="top:421.20px;"><span class="tx" style="left:98.80px">Bilans : conclusion</span>
<span class="n" style="left:201.30px">2</span>
</div>
<div class="vl" style="left:20.75px;top:432.50px;height:12px"></div>
<div class="vl" style="left:35.00px;top:432.50px;height:12px"></div>
<div class="vl" style="left:49.25px;top:432.50px;height:12.00px"></div>
<div class="hl" style="left:53.25px;top:438.00px;width:6.00px"></div>
<svg class="abs" style="left:45.85px;top:434.90px" width="7" height="7"><use href="#box"/></svg>
<svg class="abs" style="left:59.55px;top:433.80px" width="9" height="9.500"><use href="#chk"/></svg>
<svg class="abs" style="left:69.65px;top:431.70px" width="12" height="11.800" fill="#7c0606"><use href="#heart"/></svg>
<div class="row" style="top:433.20px;"><span class="tx" style="left:84.55px">Stérilité : traitements</span>
<span class="n" style="left:201.30px">3</span>
</div>
<div class="vl" style="left:20.75px;top:444.50px;height:12px"></div>
<div class="vl" style="left:35.00px;top:444.50px;height:12px"></div>
<div class="vl" style="left:49.25px;top:444.50px;height:12px"></div>
<div class="vl" style="left:63.50px;top:444.50px;height:12.00px"></div>
<div class="hl" style="left:67.50px;top:450.00px;width:6.00px"></div>
<svg class="abs" style="left:60.10px;top:446.90px" width="7" height="7"><use href="#box"/></svg>
<svg class="abs" style="left:73.80px;top:445.80px" width="9" height="9.500"><use href="#chk"/></svg>
<svg class="abs" style="left:83.90px;top:443.70px" width="12" height="11.800" fill="#7c0606"><use href="#heart"/></svg>
<div class="row" style="top:445.20px;"><span class="tx" style="left:98.80px">Stérilité masculine</span>
<span class="n" style="left:201.30px">8</span>
</div>
<div class="vl" style="left:20.75px;top:456.50px;height:12px"></div>
<div class="vl" style="left:35.00px;top:456.50px;height:12px"></div>
<div class="vl" style="left:49.25px;top:456.50px;height:12px"></div>
<div class="vl" style="left:63.50px;top:456.50px;height:12px"></div>
<div class="vl" style="left:77.75px;top:456.50px;height:12.00px"></div>
<div class="hl" style="left:77.75px;top:462.00px;width:9.00px"></div>
<svg class="abs" style="left:88.05px;top:457.80px" width="9" height="9.500"><use href="#chk"/></svg>
<svg class="abs" style="left:98.15px;top:455.70px" width="12" height="11.800" fill="#7c0606"><use href="#heart"/></svg>
<div class="row" style="top:457.20px;"><span class="tx" style="left:113.05px">Insémination par …</span>
<span class="n" style="left:201.30px">2</span>
</div>
<div class="vl" style="left:20.75px;top:468.50px;height:12px"></div>
<div class="vl" style="left:35.00px;top:468.50px;height:12px"></div>
<div class="vl" style="left:49.25px;top:468.50px;height:12px"></div>
<div class="vl" style="left:63.50px;top:468.50px;height:12px"></div>
<div class="vl" style="left:77.75px;top:468.50px;height:6.00px"></div>
<div class="hl" style="left:77.75px;top:474.00px;width:9.00px"></div>
<svg class="abs" style="left:88.05px;top:469.80px" width="9" height="9.500"><use href="#chk"/></svg>
<svg class="abs" style="left:98.15px;top:467.70px" width="12" height="11.800" fill="#7c0606"><use href="#heart"/></svg>
<div class="row" style="top:469.20px;"><span class="tx" style="left:113.05px">Insémination par …</span>
<span class="n" style="left:201.30px">2</span>
</div>
<div class="vl" style="left:20.75px;top:480.50px;height:12px"></div>
<div class="vl" style="left:35.00px;top:480.50px;height:12px"></div>
<div class="vl" style="left:49.25px;top:480.50px;height:12px"></div>
<div class="vl" style="left:63.50px;top:480.50px;height:6.00px"></div>
<div class="hl" style="left:67.50px;top:486.00px;width:6.00px"></div>
<svg class="abs" style="left:60.10px;top:482.90px" width="7" height="7"><use href="#box"/></svg>
<svg class="abs" style="left:73.80px;top:481.80px" width="9" height="9.500"><use href="#chk"/></svg>
<svg class="abs" style="left:83.90px;top:479.70px" width="12" height="11.800" fill="#7c0606"><use href="#heart"/></svg>
<div class="row" style="top:481.20px;"><span class="tx" style="left:98.80px">Stérilité féminine</span>
<span class="n" style="left:201.30px">1</span>
</div>
<div class="vl" style="left:20.75px;top:492.50px;height:12px"></div>
<div class="vl" style="left:35.00px;top:492.50px;height:12px"></div>
<div class="vl" style="left:49.25px;top:492.50px;height:12px"></div>
<div class="vl" style="left:77.75px;top:492.50px;height:12.00px"></div>
<div class="hl" style="left:77.75px;top:498.00px;width:9.00px"></div>
<svg class="abs" style="left:88.05px;top:493.80px" width="9" height="9.500"><use href="#chk"/></svg>
<svg class="abs" style="left:98.15px;top:491.70px" width="12" height="11.800" fill="#7c0606"><use href="#heart"/></svg>
<div class="row" style="top:493.20px;"><span class="tx" style="left:113.05px">Induction d&#x27;ovulat..</span>
<span class="n" style="left:201.30px">2</span>
</div>
<div class="vl" style="left:20.75px;top:504.50px;height:12px"></div>
<div class="vl" style="left:35.00px;top:504.50px;height:12px"></div>
<div class="vl" style="left:49.25px;top:504.50px;height:12px"></div>
<div class="vl" style="left:77.75px;top:504.50px;height:12.00px"></div>
<div class="hl" style="left:77.75px;top:510.00px;width:9.00px"></div>
<svg class="abs" style="left:88.05px;top:505.80px" width="9" height="9.500"><use href="#chk"/></svg>
<svg class="abs" style="left:98.15px;top:503.70px" width="12" height="11.800" fill="#7c0606"><use href="#heart"/></svg>
<div class="row" style="top:505.20px;"><span class="tx" style="left:113.05px">(micro) chirurgie</span>
<span class="n" style="left:201.30px">6</span>
</div>
<div class="vl" style="left:20.75px;top:516.50px;height:12px"></div>
<div class="vl" style="left:35.00px;top:516.50px;height:12px"></div>
<div class="vl" style="left:49.25px;top:516.50px;height:12px"></div>
<div class="vl" style="left:77.75px;top:516.50px;height:6.00px"></div>
<div class="hl" style="left:77.75px;top:522.00px;width:9.00px"></div>
<svg class="abs" style="left:88.05px;top:517.80px" width="9" height="9.500"><use href="#chk"/></svg>
<svg class="abs" style="left:98.15px;top:515.70px" width="12" height="11.800" fill="#7c0606"><use href="#heart"/></svg>
<div class="row" style="top:517.20px;"><span class="tx" style="left:113.05px">Traitement de l&#x27;e…</span>
<span class="n" style="left:201.30px">7</span>
</div>
<div class="vl" style="left:20.75px;top:528.50px;height:12px"></div>
<div class="vl" style="left:35.00px;top:528.50px;height:12px"></div>
<div class="vl" style="left:49.25px;top:528.50px;height:12.00px"></div>
<div class="hl" style="left:53.25px;top:534.00px;width:6.00px"></div>
<svg class="abs" style="left:45.85px;top:530.90px" width="7" height="7"><use href="#box"/></svg>
<svg class="abs" style="left:59.55px;top:529.80px" width="9" height="9.500"><use href="#chk"/></svg>
<svg class="abs" style="left:69.65px;top:527.70px" width="12" height="11.800" fill="#7c0606"><use href="#heart"/></svg>
<div class="row" style="top:529.20px;"><span class="tx" style="left:84.55px">Conceptions assistées</span>
<span class="n" style="left:201.30px">3</span>
</div>
<div class="vl" style="left:20.75px;top:540.50px;height:12px"></div>
<div class="vl" style="left:35.00px;top:540.50px;height:12px"></div>
<div class="vl" style="left:49.25px;top:540.50px;height:12px"></div>
<div class="vl" style="left:63.50px;top:540.50px;height:12.00px"></div>
<div class="hl" style="left:63.50px;top:546.00px;width:9.00px"></div>
<svg class="abs" style="left:73.80px;top:541.80px" width="9" height="9.500"><use href="#chk"/></svg>
<svg class="abs" style="left:83.90px;top:539.70px" width="12" height="11.800" fill="#7c0606"><use href="#heart"/></svg>
<div class="row" style="top:541.20px;"><span class="tx" style="left:98.80px">Fécondation g.i.f.t.</span>
<span class="n" style="left:201.30px">2</span>
</div>
<div class="vl" style="left:20.75px;top:552.50px;height:12px"></div>
<div class="vl" style="left:35.00px;top:552.50px;height:12px"></div>
<div class="vl" style="left:49.25px;top:552.50px;height:12px"></div>
<div class="vl" style="left:63.50px;top:552.50px;height:12.00px"></div>
<div class="hl" style="left:63.50px;top:558.00px;width:9.00px"></div>
<svg class="abs" style="left:73.80px;top:553.80px" width="9" height="9.500"><use href="#chk"/></svg>
<svg class="abs" style="left:83.90px;top:551.70px" width="12" height="11.800" fill="#7c0606"><use href="#heart"/></svg>
<div class="row" style="top:553.20px;"><span class="tx" style="left:98.80px">Fécondation in vitro</span>
<span class="n" style="left:201.30px">6</span>
</div>
<div class="vl" style="left:20.75px;top:564.50px;height:12px"></div>
<div class="vl" style="left:35.00px;top:564.50px;height:12px"></div>
<div class="vl" style="left:49.25px;top:564.50px;height:12px"></div>
<div class="vl" style="left:63.50px;top:564.50px;height:6.00px"></div>
<div class="hl" style="left:63.50px;top:570.00px;width:9.00px"></div>
<svg class="abs" style="left:73.80px;top:565.80px" width="9" height="9.500"><use href="#chk"/></svg>
<svg class="abs" style="left:83.90px;top:563.70px" width="12" height="11.800" fill="#7c0606"><use href="#heart"/></svg>
<div class="row" style="top:565.20px;"><span class="tx" style="left:98.80px">Autres fécondations</span>
<span class="n" style="left:201.30px">2</span>
</div>
<div class="vl" style="left:20.75px;top:576.50px;height:12px"></div>
<div class="vl" style="left:35.00px;top:576.50px;height:12px"></div>
<div class="vl" style="left:49.25px;top:576.50px;height:6.00px"></div>
<div class="hl" style="left:49.25px;top:582.00px;width:9.00px"></div>
<svg class="abs" style="left:59.55px;top:577.80px" width="9" height="9.500"><use href="#chk"/></svg>
<svg class="abs" style="left:69.65px;top:575.70px" width="12" height="11.800" fill="#7c0606"><use href="#heart"/></svg>
<div class="row" style="top:577.20px;"><span class="tx" style="left:84.55px">Stérilité et traitements : e…</span>
<span class="n" style="left:201.30px">1</span>
</div>
<div class="vl" style="left:20.75px;top:588.50px;height:12px"></div>
<div class="vl" style="left:35.00px;top:588.50px;height:12.00px"></div>
<div class="hl" style="left:39.00px;top:594.00px;width:6.00px"></div>
<svg class="abs" style="left:31.60px;top:590.90px" width="7" height="7"><use href="#box"/></svg>
<svg class="abs" style="left:45.30px;top:589.80px" width="9" height="9.500"><use href="#chk"/></svg>
<svg class="abs" style="left:55.40px;top:587.70px" width="12" height="11.800" fill="#7c0606"><use href="#heart"/></svg>
<div class="row" style="top:589.20px;"><span class="tx" style="left:70.30px">La contraception</span>
<span class="n" style="left:201.30px">3</span>
</div>
<div class="vl" style="left:20.75px;top:600.50px;height:12px"></div>
<div class="vl" style="left:35.00px;top:600.50px;height:12px"></div>
<div class="vl" style="left:49.25px;top:600.50px;height:12.00px"></div>
<div class="hl" style="left:49.25px;top:606.00px;width:9.00px"></div>
<svg class="abs" style="left:59.55px;top:601.80px" width="9" height="9.500"><use href="#chk"/></svg>
<svg class="abs" style="left:69.65px;top:599.70px" width="12" height="11.800" fill="#7c0606"><use href="#heart"/></svg>
<div class="row" style="top:601.20px;"><span class="tx" style="left:84.55px">Un droit du couple</span>
<span class="n" style="left:201.30px">2</span>
</div>
<div class="vl" style="left:20.75px;top:612.50px;height:12px"></div>
<div class="vl" style="left:35.00px;top:612.50px;height:12px"></div>
<div class="vl" style="left:49.25px;top:612.50px;height:12.00px"></div>
<div class="hl" style="left:49.25px;top:618.00px;width:9.00px"></div>
<svg class="abs" style="left:59.55px;top:613.80px" width="9" height="9.500"><use href="#chk"/></svg>
<svg class="abs" style="left:69.65px;top:611.70px" width="12" height="11.800" fill="#7c0606"><use href="#heart"/></svg>
<div class="row" style="top:613.20px;"><span class="tx" style="left:84.55px">Prise en charge de la cont..</span>
<span class="n" style="left:201.30px">3</span>
</div>
<div class="vl" style="left:20.75px;top:624.50px;height:12px"></div>
<div class="vl" style="left:35.00px;top:624.50px;height:12px"></div>
<div class="vl" style="left:49.25px;top:624.50px;height:12.00px"></div>
<div class="hl" style="left:49.25px;top:630.00px;width:9.00px"></div>
<svg class="abs" style="left:59.55px;top:625.80px" width="9" height="9.500"><use href="#chk"/></svg>
<svg class="abs" style="left:69.65px;top:623.70px" width="12" height="11.800" fill="#7c0606"><use href="#heart"/></svg>
<div class="row" style="top:625.20px;"><span class="tx" style="left:84.55px">Des interlocuteurs</span>
<span class="n" style="left:201.30px">3</span>
</div>
<div class="vl" style="left:20.75px;top:636.50px;height:12px"></div>
<div class="vl" style="left:35.00px;top:636.50px;height:12px"></div>
<div class="vl" style="left:49.25px;top:636.50px;height:12.00px"></div>
<div class="hl" style="left:49.25px;top:642.00px;width:9.00px"></div>
<svg class="abs" style="left:59.55px;top:637.80px" width="9" height="9.500"><use href="#chk"/></svg>
<svg class="abs" style="left:69.65px;top:635.70px" width="12" height="11.800" fill="#7c0606"><use href="#heart"/></svg>
<div class="row" style="top:637.20px;"><span class="tx" style="left:84.55px">Usage de la contraception</span>
<span class="n" style="left:201.30px">1</span>
</div>
<div class="vl" style="left:20.75px;top:648.50px;height:12px"></div>
<div class="vl" style="left:35.00px;top:648.50px;height:12px"></div>
<div class="vl" style="left:49.25px;top:648.50px;height:12.00px"></div>
<div class="hl" style="left:53.25px;top:654.00px;width:6.00px"></div>
<svg class="abs" style="left:45.85px;top:650.90px" width="7" height="7"><use href="#box"/></svg>
<svg class="abs" style="left:59.55px;top:649.80px" width="9" height="9.500"><use href="#chk"/></svg>
<svg class="abs" style="left:69.65px;top:647.70px" width="12" height="11.800" fill="#7c0606"><use href="#heart"/></svg>
<div class="row" style="top:649.20px;"><span class="tx" style="left:84.55px">Contraception : méthodes..</span>
<span class="n" style="left:201.30px">3</span>
<span class="n" style="left:239.00px">1</span>
</div>
<div class="vl" style="left:20.75px;top:660.50px;height:12px"></div>
<div class="vl" style="left:35.00px;top:660.50px;height:12px"></div>
<div class="vl" style="left:49.25px;top:660.50px;height:12px"></div>
<div class="vl" style="left:63.50px;top:660.50px;height:12.00px"></div>
<div class="hl" style="left:63.50px;top:666.00px;width:9.00px"></div>
<svg class="abs" style="left:73.80px;top:661.80px" width="9" height="9.500"><use href="#chk"/></svg>
<svg class="abs" style="left:83.90px;top:659.70px" width="12" height="11.800" fill="#7c0606"><use href="#heart"/></svg>
<div class="row" style="top:661.20px;"><span class="tx" style="left:98.80px">Méthode des tempéra..</span>
<span class="n" style="left:201.30px">6</span>
</div>
<div class="vl" style="left:20.75px;top:672.50px;height:12px"></div>
<div class="vl" style="left:35.00px;top:672.50px;height:12px"></div>
<div class="vl" style="left:49.25px;top:672.50px;height:12px"></div>
<div class="vl" style="left:63.50px;top:672.50px;height:12.00px"></div>
<div class="hl" style="left:63.50px;top:678.00px;width:9.00px"></div>
<svg class="abs" style="left:73.80px;top:673.80px" width="9" height="9.500"><use href="#chk"/></svg>
<svg class="abs" style="left:83.90px;top:671.70px" width="12" height="11.800" fill="#7c0606"><use href="#heart"/></svg>
<div class="row" style="top:673.20px;"><span class="tx" style="left:98.80px">Méthode Billings</span>
<span class="n" style="left:201.30px">7</span>
<span class="n" style="left:239.00px">1</span>
</div>
<div class="vl" style="left:20.75px;top:684.50px;height:12px"></div>
<div class="vl" style="left:35.00px;top:684.50px;height:12px"></div>
<div class="vl" style="left:49.25px;top:684.50px;height:12px"></div>
<div class="vl" style="left:63.50px;top:684.50px;height:6.00px"></div>
<div class="vl" style="left:20.75px;top:696.50px;height:12px"></div>
<div class="vl" style="left:35.00px;top:696.50px;height:12px"></div>
<div class="vl" style="left:49.25px;top:696.50px;height:6.00px"></div>
<div class="vl" style="left:20.75px;top:708.50px;height:12px"></div>
<div class="vl" style="left:35.00px;top:708.50px;height:6.00px"></div>
<div class="vl" style="left:20.75px;top:720.50px;height:6.00px"></div>
</div>
<div class="abs" style="left:401px;top:62px;width:11.500px;height:679px;background:#e9e9e9"></div>
<div class="abs" style="left:401px;top:62px;width:11.5px;height:12px;background:#cdcdcd;border:1px solid;border-color:#fff #444 #444 #fff;box-shadow:inset -1px -1px 0 #8a8a8a"></div>
<svg class="abs" style="left:402.95px;top:64.2px" width="7" height="7"><path d="M1 4.500L3.500 1.800L6 4.500Z" fill="#000"/></svg>
<div class="abs" style="left:401px;top:74px;width:11.5px;height:25.5px;background:#cdcdcd;border:1px solid;border-color:#fff #444 #444 #fff;box-shadow:inset -1px -1px 0 #8a8a8a"></div>
<div class="abs" style="left:401px;top:729px;width:11.5px;height:12px;background:#cdcdcd;border:1px solid;border-color:#fff #444 #444 #fff;box-shadow:inset -1px -1px 0 #8a8a8a"></div>
<svg class="abs" style="left:402.95px;top:731.2px" width="7" height="7"><path d="M1 2L3.500 4.700L6 2Z" fill="#000"/></svg>
<div class="abs" style="left:66px;top:741px;width:335px;height:11.500px;background:#e9e9e9"></div>
<div class="abs" style="left:401px;top:741px;width:11.500px;height:11.500px;background:#cdcdcd"></div>
<div class="abs" style="left:66px;top:741px;width:12px;height:11.5px;background:#cdcdcd;border:1px solid;border-color:#fff #444 #444 #fff;box-shadow:inset -1px -1px 0 #8a8a8a"></div>
<svg class="abs" style="left:68.2px;top:742.95px" width="7" height="7"><path d="M4.500 1L1.800 3.500L4.500 6Z" fill="#000"/></svg>
<div class="abs" style="left:78px;top:741px;width:11.5px;height:11.5px;background:#cdcdcd;border:1px solid;border-color:#fff #444 #444 #fff;box-shadow:inset -1px -1px 0 #8a8a8a"></div>
<div class="abs" style="left:389px;top:741px;width:12px;height:11.5px;background:#cdcdcd;border:1px solid;border-color:#fff #444 #444 #fff;box-shadow:inset -1px -1px 0 #8a8a8a"></div>
<svg class="abs" style="left:391.2px;top:742.95px" width="7" height="7"><path d="M2.200 1L4.900 3.500L2.200 6Z" fill="#000"/></svg>
<div class="abs" style="left:416.500px;top:48.500px;width:1.600px;height:706px;background:#2a2a2a"></div>
<div class="abs" style="left:418px;top:48.500px;width:542px;height:683px;border-top:1px solid #555;background:#fff"></div>
<svg class="abs" style="left:437.200px;top:67px" width="101.800" height="101.800" viewBox="0 0 102 102"><defs><filter id="bl" x="-10%" y="-10%" width="120%" height="120%"><feGaussianBlur stdDeviation="0.7"/></filter><filter id="bl2" x="-20%" y="-20%" width="140%" height="140%"><feGaussianBlur stdDeviation="1.8"/></filter><clipPath id="cp"><rect width="102" height="102" rx="2"/></clipPath><clipPath id="fig"><path d="M79.700 0L73.700 7.900L64.700 17.700L60.200 25.200L55.700 31.600L51.200 33.400L43.700 33.100L37.800 34.900L35.200 39.400L34.800 45.400L30.300 50.600L27.300 52.900L27 57.400L26.500 64.900L25 67.600L12.300 67.100L7 66.400L7 52.900L5.500 47.600L1.800 45.700L0 45.700L0 102L49 102L48.200 96.300L42.200 90.300L36.300 85.100L35.500 81.300L42.200 72.400L52.700 60.400L60.200 51.400L67.700 40.900L76.700 27.400L85.700 15.400L94.700 6.400L102 0Z"/></clipPath></defs><g clip-path="url(#cp)"><rect width="102" height="102" fill="#c9c9c9"/><g clip-path="url(#fig)"><rect width="102" height="102" fill="#fbcfce"/><g filter="url(#bl2)" fill="none" stroke-linejoin="round"><path d="M82 -2L73.700 7.900L64.700 17.700L60.200 25.200L55.700 31.600L51.200 33.400L43.700 33.100L37.800 34.900L35.200 39.400L34.800 45.400L30.300 50.600L27.300 52.900L27 57.400L26.500 64.900L25 67.600L12.300 67.100L7 66.400" stroke="#fff4d4" stroke-width="20"/></g><g filter="url(#bl)"><path d="M82 -2L73.700 7.900L64.700 17.700L60.200 25.200L55.700 31.600L51.200 33.400L43.700 33.100L37.800 34.900L35.200 39.400L34.800 45.400L30.300 50.600L27.300 52.900L27 57.400" fill="none" stroke="#fff" stroke-width="9"/><path d="M37 34L56 31L58.500 35.500L47 41.500L42 48L36 52L33 47Z" fill="#fff"/><path d="M6 66L25.500 67L27 71L21.500 81L14 73Z" fill="#fff"/><ellipse cx="64.400" cy="40.100" rx="7.500" ry="2.300" transform="rotate(-52 64.400 40.100)" fill="#fff"/><path d="M4 85L23 88.500L29.500 103L3 103Z" fill="#cbc6c6"/></g></g></g></svg>
<div class="toc k" style="left:544.500px;top:66.700px;font-size:20.700px;line-height:24px;color:#000">Table des matières</div>
<div class="nav" style="top:195.800px">Avertissement</div>
<div class="nav" style="top:222.600px"><span class="k">1.</span> La conception<br><span class="k">2.</span> La grossesse<br><span class="k">3.</span> La préparation<br><span class="k">4.</span> L'accouchement<br><span class="k">5.</span> Le nourrisson<br><span class="k">6.</span> Un prénom</div>
<div class="nav" style="top:317.100px">Table<br>Index<br>Images<br>Bibliographie</div>
<div class="abs" style="left:419px;top:50px;width:528px;height:681px;overflow:hidden">
<svg class="abs" style="left:145.60px;top:40.60px" width="13" height="13"><use href="#dia"/></svg>
<div class="toc g" style="left:164.00px;top:41.40px;font-size:11.75px;line-height:14px;word-spacing:0.3px">Petite encyclopédie pratique de la maternité</div>
<svg class="abs" style="left:166.10px;top:54.40px" width="13" height="13"><use href="#dia"/></svg>
<div class="toc k" style="left:187.00px;top:55.10px;font-size:11.65px;line-height:14px">1.</div>
<div class="toc g" style="left:199.75px;top:55.10px;font-size:11.55px;line-height:14px;word-spacing:0.3px">La conception, ou comment on fait les bébés</div>
<svg class="abs" style="left:185.60px;top:67.80px" width="13" height="13"><use href="#dia"/></svg>
<div class="toc k" style="left:207.00px;top:68.70px;font-size:9.799999999999999px;line-height:14px">1.1.</div>
<div class="toc p" style="left:227.30px;top:68.70px;font-size:9.7px;line-height:14px;word-spacing:0.3px">Décider d&#x27;avoir un enfant</div>
<svg class="abs" style="left:205.60px;top:80.56px" width="13" height="13"><use href="#dia"/></svg>
<div class="toc k" style="left:227.50px;top:81.46px;font-size:9.799999999999999px;line-height:14px">1.1.1.</div>
<div class="toc g" style="left:255.40px;top:81.46px;font-size:9.7px;line-height:14px;word-spacing:0.3px">Choix ou hasard ?</div>
<svg class="abs" style="left:205.60px;top:93.32px" width="13" height="13"><use href="#dia"/></svg>
<div class="toc k" style="left:227.50px;top:94.22px;font-size:9.799999999999999px;line-height:14px">1.1.2.</div>
<div class="toc g" style="left:255.40px;top:94.22px;font-size:9.7px;line-height:14px;word-spacing:0.3px">Décision du couple</div>
<svg class="abs" style="left:205.60px;top:106.09px" width="13" height="13"><use href="#dia"/></svg>
<div class="toc k" style="left:227.50px;top:106.99px;font-size:9.799999999999999px;line-height:14px">1.1.3.</div>
<div class="toc g" style="left:255.40px;top:106.99px;font-size:9.7px;line-height:14px;word-spacing:0.3px">Un choix informé</div>
<svg class="abs" style="left:205.60px;top:118.85px" width="13" height="13"><use href="#dia"/></svg>
<div class="toc k" style="left:227.50px;top:119.75px;font-size:9.799999999999999px;line-height:14px">1.1.4.</div>
<div class="toc g" style="left:255.40px;top:119.75px;font-size:9.7px;line-height:14px;word-spacing:0.3px">Facteurs d&#x27;influence</div>
<svg class="abs" style="left:205.60px;top:131.61px" width="13" height="13"><use href="#dia"/></svg>
<div class="toc k" style="left:227.50px;top:132.51px;font-size:9.799999999999999px;line-height:14px">1.1.5.</div>
<div class="toc p" style="left:255.40px;top:132.51px;font-size:9.7px;line-height:14px;word-spacing:0.3px">Présentation du chapitre</div>
<svg class="abs" style="left:185.60px;top:144.37px" width="13" height="13"><use href="#dia"/></svg>
<div class="toc k" style="left:207.00px;top:145.27px;font-size:9.799999999999999px;line-height:14px">1.2.</div>
<div class="toc p" style="left:227.30px;top:145.27px;font-size:9.7px;line-height:14px;word-spacing:0.3px">Le cycle de la femme</div>
<svg class="abs" style="left:205.60px;top:157.13px" width="13" height="13"><use href="#dia"/></svg>
<div class="toc k" style="left:227.50px;top:158.03px;font-size:9.799999999999999px;line-height:14px">1.2.1.</div>
<div class="toc g" style="left:255.40px;top:158.03px;font-size:9.7px;line-height:14px;word-spacing:0.3px">Connaître le cycle de la femme</div>
<svg class="abs" style="left:205.60px;top:169.90px" width="13" height="13"><use href="#dia"/></svg>
<div class="toc k" style="left:227.50px;top:170.80px;font-size:9.799999999999999px;line-height:14px">1.2.2.</div>
<div class="toc p" style="left:255.40px;top:170.80px;font-size:9.7px;line-height:14px;word-spacing:0.3px">De J1 à J6 : les règles</div>
<svg class="abs" style="left:205.60px;top:182.66px" width="13" height="13"><use href="#dia"/></svg>
<div class="toc k" style="left:227.50px;top:183.56px;font-size:9.799999999999999px;line-height:14px">1.2.3.</div>
<div class="toc p" style="left:255.40px;top:183.56px;font-size:9.7px;line-height:14px;word-spacing:0.3px">De J7 à J10 : non fertile</div>
<svg class="abs" style="left:205.60px;top:195.42px" width="13" height="13"><use href="#dia"/></svg>
<div class="toc k" style="left:227.50px;top:196.32px;font-size:9.799999999999999px;line-height:14px">1.2.4.</div>
<div class="toc p" style="left:255.40px;top:196.32px;font-size:9.7px;line-height:14px;word-spacing:0.3px">De J11 à J17 : fertile</div>
<svg class="abs" style="left:205.60px;top:208.18px" width="13" height="13"><use href="#dia"/></svg>
<div class="toc k" style="left:227.50px;top:209.08px;font-size:9.799999999999999px;line-height:14px">1.2.5.</div>
<div class="toc g" style="left:255.40px;top:209.08px;font-size:9.7px;line-height:14px;word-spacing:0.3px">De J18 à j28 : non fertile</div>
<svg class="abs" style="left:185.60px;top:220.94px" width="13" height="13"><use href="#dia"/></svg>
<div class="toc k" style="left:207.00px;top:221.84px;font-size:9.799999999999999px;line-height:14px">1.3.</div>
<div class="toc g" style="left:227.30px;top:221.84px;font-size:9.7px;line-height:14px;word-spacing:0.3px">Conception</div>
<svg class="abs" style="left:205.60px;top:233.71px" width="13" height="13"><use href="#dia"/></svg>
<div class="toc k" style="left:227.50px;top:234.61px;font-size:9.799999999999999px;line-height:14px">1.3.1.</div>
<div class="toc p" style="left:255.40px;top:234.61px;font-size:9.7px;line-height:14px;word-spacing:0.3px">Comment on fait les bébés</div>
<svg class="abs" style="left:205.60px;top:246.47px" width="13" height="13"><use href="#dia"/></svg>
<div class="toc k" style="left:227.50px;top:247.37px;font-size:9.799999999999999px;line-height:14px">1.3.2.</div>
<div class="toc g" style="left:255.40px;top:247.37px;font-size:9.7px;line-height:14px;word-spacing:0.3px">Rapport sexuel</div>
<svg class="abs" style="left:205.60px;top:259.23px" width="13" height="13"><use href="#dia"/></svg>
<div class="toc k" style="left:227.50px;top:260.13px;font-size:9.799999999999999px;line-height:14px">1.3.3.</div>
<div class="toc p" style="left:255.40px;top:260.13px;font-size:9.7px;line-height:14px;word-spacing:0.3px">Une 4ème condition</div>
<svg class="abs" style="left:205.60px;top:271.99px" width="13" height="13"><use href="#dia"/></svg>
<div class="toc k" style="left:227.50px;top:272.89px;font-size:9.799999999999999px;line-height:14px">1.3.4.</div>
<div class="toc p" style="left:255.40px;top:272.89px;font-size:9.7px;line-height:14px;word-spacing:0.3px">Rapports et ovulation</div>
<svg class="abs" style="left:205.60px;top:284.75px" width="13" height="13"><use href="#dia"/></svg>
<div class="toc k" style="left:227.50px;top:285.65px;font-size:9.799999999999999px;line-height:14px">1.3.5.</div>
<div class="toc p" style="left:255.40px;top:285.65px;font-size:9.7px;line-height:14px;word-spacing:0.3px">Fille ou garçon ?</div>
<svg class="abs" style="left:205.60px;top:297.52px" width="13" height="13"><use href="#dia"/></svg>
<div class="toc k" style="left:227.50px;top:298.42px;font-size:9.799999999999999px;line-height:14px">1.3.6.</div>
<div class="toc p" style="left:255.40px;top:298.42px;font-size:9.7px;line-height:14px;word-spacing:0.3px">Favoriser un garçon...</div>
<svg class="abs" style="left:205.60px;top:310.28px" width="13" height="13"><use href="#dia"/></svg>
<div class="toc k" style="left:227.50px;top:311.18px;font-size:9.799999999999999px;line-height:14px">1.3.7.</div>
<div class="toc p" style="left:255.40px;top:311.18px;font-size:9.7px;line-height:14px;word-spacing:0.3px">Favoriser une fille...</div>
<svg class="abs" style="left:205.60px;top:323.04px" width="13" height="13"><use href="#dia"/></svg>
<div class="toc k" style="left:227.50px;top:323.94px;font-size:9.799999999999999px;line-height:14px">1.3.8.</div>
<div class="toc p" style="left:255.40px;top:323.94px;font-size:9.7px;line-height:14px;word-spacing:0.3px">En conclusion</div>
<svg class="abs" style="left:185.60px;top:335.80px" width="13" height="13"><use href="#dia"/></svg>
<div class="toc k" style="left:207.00px;top:336.70px;font-size:9.799999999999999px;line-height:14px">1.4.</div>
<div class="toc p" style="left:227.30px;top:336.70px;font-size:9.7px;line-height:14px;word-spacing:0.3px">Si le bébé tarde à venir...</div>
<svg class="abs" style="left:205.60px;top:348.56px" width="13" height="13"><use href="#dia"/></svg>
<div class="toc k" style="left:227.50px;top:349.46px;font-size:9.799999999999999px;line-height:14px">1.4.1.</div>
<div class="toc p" style="left:255.40px;top:349.46px;font-size:9.7px;line-height:14px;word-spacing:0.3px">Quand parler de stérilité ?</div>
<svg class="abs" style="left:205.60px;top:361.33px" width="13" height="13"><use href="#dia"/></svg>
<div class="toc k" style="left:227.50px;top:362.23px;font-size:9.799999999999999px;line-height:14px">1.4.2.</div>
<div class="toc p" style="left:255.40px;top:362.23px;font-size:9.7px;line-height:14px;word-spacing:0.3px">Causes de stérilité</div>
<svg class="abs" style="left:205.60px;top:374.09px" width="13" height="13"><use href="#dia"/></svg>
<div class="toc k" style="left:227.50px;top:374.99px;font-size:9.799999999999999px;line-height:14px">1.4.3.</div>
<div class="toc p" style="left:255.40px;top:374.99px;font-size:9.7px;line-height:14px;word-spacing:0.3px">Bilan d&#x27;un couple stérile</div>
<svg class="abs" style="left:225.40px;top:386.85px" width="13" height="13"><use href="#dia"/></svg>
<div class="toc p" style="left:244.00px;top:387.75px;font-size:9.7px;line-height:14px;word-spacing:0.3px">Première consultation</div>
<svg class="abs" style="left:225.40px;top:399.61px" width="13" height="13"><use href="#dia"/></svg>
<div class="toc p" style="left:244.00px;top:400.51px;font-size:9.7px;line-height:14px;word-spacing:0.3px">Bilans complémentaires</div>
<svg class="abs" style="left:225.40px;top:412.37px" width="13" height="13"><use href="#dia"/></svg>
<div class="toc p" style="left:244.00px;top:413.27px;font-size:9.7px;line-height:14px;word-spacing:0.3px">Hystérosalpingographie</div>
<svg class="abs" style="left:225.40px;top:425.14px" width="13" height="13"><use href="#dia"/></svg>
<div class="toc p" style="left:244.00px;top:426.04px;font-size:9.7px;line-height:14px;word-spacing:0.3px">Echographie pelvienne</div>
<svg class="abs" style="left:225.40px;top:437.90px" width="13" height="13"><use href="#dia"/></svg>
<div class="toc p" style="left:244.00px;top:438.80px;font-size:9.7px;line-height:14px;word-spacing:0.3px">Spermogramme</div>
<svg class="abs" style="left:225.40px;top:450.66px" width="13" height="13"><use href="#dia"/></svg>
<div class="toc p" style="left:244.00px;top:451.56px;font-size:9.7px;line-height:14px;word-spacing:0.3px">Examen bactériologique</div>
<svg class="abs" style="left:225.40px;top:463.42px" width="13" height="13"><use href="#dia"/></svg>
<div class="toc p" style="left:244.00px;top:464.32px;font-size:9.7px;line-height:14px;word-spacing:0.3px">Bilan hormonal</div>
<svg class="abs" style="left:225.40px;top:476.18px" width="13" height="13"><use href="#dia"/></svg>
<div class="toc p" style="left:244.00px;top:477.08px;font-size:9.7px;line-height:14px;word-spacing:0.3px">Bilans approfondis</div>
<svg class="abs" style="left:225.40px;top:488.95px" width="13" height="13"><use href="#dia"/></svg>
<div class="toc p" style="left:244.00px;top:489.85px;font-size:9.7px;line-height:14px;word-spacing:0.3px">Bilans : conclusion</div>
<svg class="abs" style="left:205.60px;top:501.71px" width="13" height="13"><use href="#dia"/></svg>
<div class="toc k" style="left:227.50px;top:502.61px;font-size:9.799999999999999px;line-height:14px">1.4.4.</div>
<div class="toc p" style="left:255.40px;top:502.61px;font-size:9.7px;line-height:14px;word-spacing:0.3px">Stérilité : traitements</div>
<svg class="abs" style="left:225.40px;top:514.47px" width="13" height="13"><use href="#dia"/></svg>
<div class="toc p" style="left:244.00px;top:515.37px;font-size:9.7px;line-height:14px;word-spacing:0.3px">Stérilité masculine</div>
<svg class="abs" style="left:245.60px;top:527.23px" width="13" height="13"><use href="#dia"/></svg>
<div class="toc p" style="left:264.60px;top:528.13px;font-size:9.7px;line-height:14px;word-spacing:0.3px">Insémination par conjoint</div>
<svg class="abs" style="left:245.60px;top:539.99px" width="13" height="13"><use href="#dia"/></svg>
<div class="toc p" style="left:264.60px;top:540.89px;font-size:9.7px;line-height:14px;word-spacing:0.3px">Insémination par donneur</div>
<svg class="abs" style="left:225.40px;top:552.76px" width="13" height="13"><use href="#dia"/></svg>
<div class="toc p" style="left:244.00px;top:553.66px;font-size:9.7px;line-height:14px;word-spacing:0.3px">Stérilité féminine</div>
<svg class="abs" style="left:245.60px;top:565.52px" width="13" height="13"><use href="#dia"/></svg>
<div class="toc p" style="left:264.60px;top:566.42px;font-size:9.7px;line-height:14px;word-spacing:0.3px">Induction d&#x27;ovulation</div>
<svg class="abs" style="left:245.60px;top:578.28px" width="13" height="13"><use href="#dia"/></svg>
<div class="toc p" style="left:264.60px;top:579.18px;font-size:9.7px;line-height:14px;word-spacing:0.3px">(micro) chirurgie</div>
<svg class="abs" style="left:245.60px;top:591.04px" width="13" height="13"><use href="#dia"/></svg>
<div class="toc p" style="left:264.60px;top:591.94px;font-size:9.7px;line-height:14px;word-spacing:0.3px">Traitement de l&#x27;endométriose</div>
<svg class="abs" style="left:205.60px;top:603.80px" width="13" height="13"><use href="#dia"/></svg>
<div class="toc k" style="left:227.50px;top:604.70px;font-size:9.799999999999999px;line-height:14px">1.4.5.</div>
<div class="toc p" style="left:255.40px;top:604.70px;font-size:9.7px;line-height:14px;word-spacing:0.3px">Conceptions assistées</div>
<svg class="abs" style="left:225.40px;top:616.57px" width="13" height="13"><use href="#dia"/></svg>
<div class="toc p" style="left:244.00px;top:617.47px;font-size:9.7px;line-height:14px;word-spacing:0.3px">Fécondation g.i.f.t.</div>
<svg class="abs" style="left:225.40px;top:629.33px" width="13" height="13"><use href="#dia"/></svg>
<div class="toc p" style="left:244.00px;top:630.23px;font-size:9.7px;line-height:14px;word-spacing:0.3px">Fécondation in vitro</div>
<svg class="abs" style="left:225.40px;top:642.09px" width="13" height="13"><use href="#dia"/></svg>
<div class="toc p" style="left:244.00px;top:642.99px;font-size:9.7px;line-height:14px;word-spacing:0.3px">Autres fécondations</div>
<svg class="abs" style="left:205.60px;top:654.85px" width="13" height="13"><use href="#dia"/></svg>
<div class="toc k" style="left:227.50px;top:655.75px;font-size:9.799999999999999px;line-height:14px">1.4.6.</div>
<div class="toc p" style="left:255.40px;top:655.75px;font-size:9.7px;line-height:14px;word-spacing:0.3px">Stérilité et traitements : espoir et contraintes</div>
<svg class="abs" style="left:185.60px;top:667.61px" width="13" height="13"><use href="#dia"/></svg>
<div class="toc k" style="left:207.00px;top:668.51px;font-size:9.799999999999999px;line-height:14px">1.5.</div>
<div class="toc p" style="left:227.30px;top:668.51px;font-size:9.7px;line-height:14px;word-spacing:0.3px">La contraception</div>
</div>
<div class="abs" style="left:947px;top:50px;width:13px;height:681px;background:#fff"></div>
<svg class="abs" style="left:947.500px;top:50.5px" width="11.500" height="11.500" viewBox="0 0 11 11"><rect x="0.5" y="0.5" width="10" height="10" fill="#fff" stroke="#a050a4" stroke-width="0.9"/><path d="M2.500 6.500L5.500 3.500L8.500 6.500Z" fill="#7a0a7a"/></svg>
<svg class="abs" style="left:947.500px;top:718.8px" width="11.500" height="11.500" viewBox="0 0 11 11"><rect x="0.5" y="0.5" width="10" height="10" fill="#fff" stroke="#a050a4" stroke-width="0.9"/><path d="M2.500 4L5.500 7L8.500 4Z" fill="#7a0a7a"/></svg>
<div class="abs" style="left:948px;top:62.500px;width:10.500px;height:96px;border:1px solid #a058a4;background:#fff"></div>
<div class="abs" style="left:418px;top:731.500px;width:542px;height:1px;background:#e0e0e0"></div>
<div class="abs" style="left:417px;top:732.700px;width:92px;height:1.200px;background:#1c1c1c"></div><div class="abs" style="left:585.500px;top:732.700px;width:375px;height:1.200px;background:#1c1c1c"></div>
<div class="abs ui" style="left:418px;top:733.800px;width:46.5px;height:14.600px;background:#cdcdcd;border-style:solid;border-width:0 1.200px 1.200px 1.200px;border-color:#1c1c1c;text-align:center;font-size:9.050px;line-height:13.800px;border-radius:0 0 2px 2px">Normal</div>
<div class="abs ui" style="left:465px;top:733.800px;width:43.8px;height:14.600px;background:#cdcdcd;border-style:solid;border-width:0 1.200px 1.200px 1.200px;border-color:#1c1c1c;text-align:center;font-size:9.050px;line-height:13.800px;border-radius:0 0 2px 2px">HTML</div>
<div class="abs ui" style="left:508.8px;top:732.700px;width:77.5px;height:15.700px;background:#cdcdcd;border-style:solid;border-width:0 1.200px 1.200px 1.500px;border-color:#1c1c1c #1c1c1c #1c1c1c #f4f4f4;text-align:center;font-size:9.050px;line-height:15.800px;border-radius:0 0 2px 1px">Page preview</div>
<div class="abs" style="left:0;top:753.500px;width:960px;height:1px;background:#f6f6f6"></div>
<div class="abs ui" style="left:898px;top:756px;width:18px;height:11.500px;border:1px solid;border-color:#777 #fff #fff #777;text-align:center;font-size:7.6px;line-height:9.500px"></div>
<div class="abs ui" style="left:917px;top:756px;width:22px;height:11.500px;border:1px solid;border-color:#777 #fff #fff #777;text-align:center;font-size:7.6px;line-height:9.500px">NUM</div>
<div class="abs ui" style="left:940px;top:756px;width:19px;height:11.500px;border:1px solid;border-color:#777 #fff #fff #777;text-align:center;font-size:7.6px;line-height:9.500px"></div>
</div></body></html>
